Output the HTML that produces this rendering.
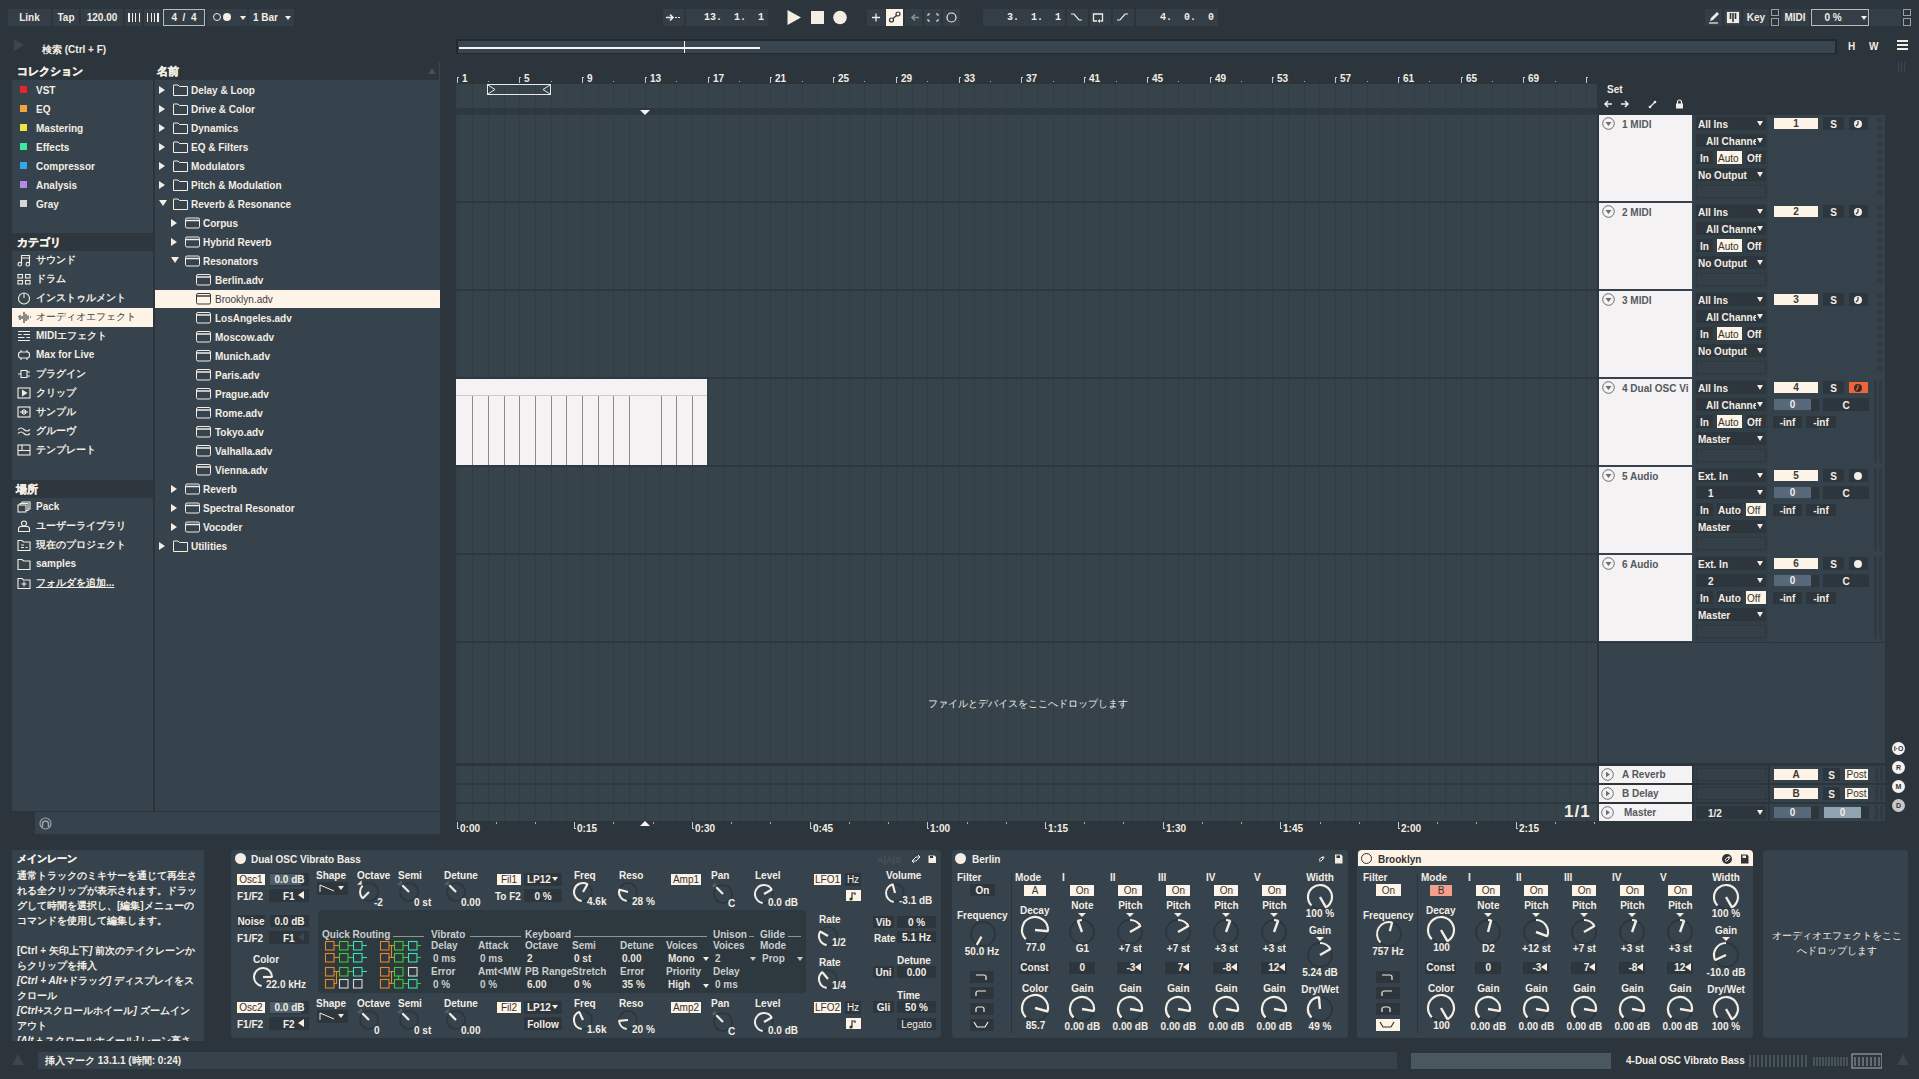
<!DOCTYPE html><html><head><meta charset="utf-8"><style>
html,body{margin:0;padding:0;width:1919px;height:1079px;overflow:hidden;background:#2c353c;}
body{position:relative;font-family:"Liberation Sans",sans-serif;}
body>div,body>svg{position:absolute;}
.t{white-space:nowrap;}
.tri{width:0;height:0;border-style:solid;}
</style></head><body>
<div style="left:8px;top:9px;width:43px;height:17px;background:#333e46;"></div><div class="t " style="left:8px;top:13px;font-size:10px;line-height:10px;font-weight:bold;color:#f3ede4;width:43px;text-align:center">Link</div><div style="left:53px;top:9px;width:26px;height:17px;background:#333e46;"></div><div class="t " style="left:53px;top:13px;font-size:10px;line-height:10px;font-weight:bold;color:#f3ede4;width:26px;text-align:center">Tap</div><div style="left:81px;top:9px;width:42px;height:17px;background:#333e46;"></div><div class="t " style="left:81px;top:13px;font-size:10px;line-height:10px;font-weight:bold;color:#f3ede4;width:42px;text-align:center">120.00</div><div style="left:125px;top:9px;width:17px;height:17px;background:#333e46;"></div><div style="left:144px;top:9px;width:17px;height:17px;background:#333e46;"></div><div style="left:128px;top:13px;width:2px;height:9px;background:#f3ede4;"></div><div style="left:132px;top:13px;width:1px;height:9px;background:#f3ede4;"></div><div style="left:135px;top:13px;width:1px;height:9px;background:#f3ede4;"></div><div style="left:139px;top:13px;width:1px;height:9px;background:#f3ede4;"></div><div style="left:147px;top:13px;width:1px;height:9px;background:#f3ede4;"></div><div style="left:151px;top:13px;width:1px;height:9px;background:#f3ede4;"></div><div style="left:154px;top:13px;width:1px;height:9px;background:#f3ede4;"></div><div style="left:157px;top:13px;width:2px;height:9px;background:#f3ede4;"></div><div style="left:163px;top:9px;width:42px;height:17px;background:#333e46;box-sizing:border-box;border:1px solid #b9bcbc"></div><div class="t " style="left:163px;top:13px;font-size:10px;line-height:10px;font-weight:bold;color:#f3ede4;width:42px;text-align:center">4 &nbsp;/ &nbsp;4</div><div style="left:207px;top:9px;width:40px;height:17px;background:#333e46;"></div><div style="left:213px;top:13px;width:8px;height:8px;box-sizing:border-box;border:1px solid #f3ede4;border-radius:50%"></div><div style="left:223px;top:13px;width:8px;height:8px;background:#f3ede4;border-radius:50%"></div><div class="tri" style="left:240px;top:16px;border-width:4px 3px 0 3px;border-color:#f3ede4 transparent transparent transparent"></div><div style="left:249px;top:9px;width:45px;height:17px;background:#333e46;"></div><div class="t " style="left:253px;top:13px;font-size:10px;line-height:10px;font-weight:bold;color:#f3ede4;">1 Bar</div><div class="tri" style="left:285px;top:16px;border-width:4px 3px 0 3px;border-color:#f3ede4 transparent transparent transparent"></div><div style="left:663px;top:9px;width:21px;height:17px;background:#333e46;"></div><svg style="left:665px;top:12px" width="18" height="11"><path d="M1 5.5h7M5 2.5l3 3-3 3" stroke="#f3ede4" stroke-width="1.6" fill="none"/><path d="M10 5.5h2M13 5.5h2" stroke="#f3ede4" stroke-width="1.2"/></svg><div style="left:686px;top:9px;width:82px;height:17px;background:#333e46;"></div><div class="t " style="left:686px;top:13px;font-size:10px;line-height:10px;font-weight:bold;color:#f3ede4;width:78px;text-align:right;font-family:'Liberation Mono'">13.&nbsp;&nbsp;1.&nbsp;&nbsp;1</div><svg style="left:786px;top:9px" width="62" height="18"><path d="M1.5 1L15 8.5 1.5 16z" fill="#f3ede4"/><rect x="25" y="2" width="13" height="13" fill="#f3ede4"/><circle cx="54" cy="8.5" r="6.8" fill="#f3ede4"/></svg><div style="left:867px;top:9px;width:18px;height:17px;background:#333e46;"></div><div style="left:886px;top:9px;width:17px;height:17px;background:#fdf3e6;"></div><div style="left:905px;top:9px;width:17px;height:17px;background:#333e46;"></div><div style="left:924px;top:9px;width:17px;height:17px;background:#333e46;"></div><div style="left:943px;top:9px;width:17px;height:17px;background:#333e46;"></div><svg style="left:867px;top:9px" width="94" height="17"><path d="M9 4.5v8M5 8.5h8" stroke="#f3ede4" stroke-width="1.3"/><circle cx="24.5" cy="11" r="2" fill="none" stroke="#2c353c" stroke-width="1.2"/><circle cx="31" cy="5" r="2" fill="none" stroke="#2c353c" stroke-width="1.2"/><path d="M26 9.5l3.5-3" stroke="#2c353c" stroke-width="1.2"/><path d="M45 8.5h7M48 5.5l-3 3 3 3" stroke="#8a8f90" stroke-width="1.6" fill="none"/><path d="M61 7V5h2M69 5h2v2M71 10v2h-2M63 12h-2v-2" stroke="#f3ede4" stroke-width="1" fill="none"/><circle cx="84.5" cy="8.5" r="4.5" fill="none" stroke="#f3ede4" stroke-width="1.2"/></svg><div style="left:983px;top:9px;width:82px;height:17px;background:#333e46;"></div><div class="t " style="left:983px;top:13px;font-size:10px;line-height:10px;font-weight:bold;color:#f3ede4;width:78px;text-align:right;font-family:'Liberation Mono'">3.&nbsp;&nbsp;1.&nbsp;&nbsp;1</div><div style="left:1067px;top:9px;width:21px;height:17px;background:#333e46;"></div><div style="left:1090px;top:9px;width:21px;height:17px;background:#333e46;"></div><div style="left:1113px;top:9px;width:21px;height:17px;background:#333e46;"></div><svg style="left:1067px;top:9px" width="68" height="17"><path d="M4 5h3l5 6h3" stroke="#f3ede4" stroke-width="1.2" fill="none"/><path d="M30 12h-3.5v-7h9v7h-2" stroke="#f3ede4" stroke-width="1.3" fill="none"/><path d="M33 10l-2.5 2 2.5 2z" fill="#f3ede4"/><path d="M50 11h3l5-6h3" stroke="#f3ede4" stroke-width="1.2" fill="none"/></svg><div style="left:1136px;top:9px;width:82px;height:17px;background:#333e46;"></div><div class="t " style="left:1136px;top:13px;font-size:10px;line-height:10px;font-weight:bold;color:#f3ede4;width:78px;text-align:right;font-family:'Liberation Mono'">4.&nbsp;&nbsp;0.&nbsp;&nbsp;0</div><div style="left:1705px;top:9px;width:17px;height:17px;background:#333e46;"></div><div style="left:1724px;top:9px;width:17px;height:17px;background:#333e46;"></div><div style="left:1743px;top:9px;width:26px;height:17px;background:#333e46;"></div><div style="left:1781px;top:9px;width:28px;height:17px;background:#333e46;"></div><svg style="left:1705px;top:9px" width="40" height="17"><path d="M4 14h9" stroke="#f3ede4" stroke-width="1.2"/><path d="M5 12l1-3 6-6 2 2-6 6z" fill="#f3ede4"/><rect x="22.5" y="3.5" width="11" height="10" fill="#f3ede4" stroke="#f3ede4" stroke-width="1.2"/><path d="M25.5 4v6M28 4v9M30.5 4v6" stroke="#2c353c" stroke-width="1.6"/></svg><div class="t " style="left:1743px;top:13px;font-size:10px;line-height:10px;font-weight:bold;color:#f3ede4;width:26px;text-align:center">Key</div><div style="left:1771px;top:9px;width:8px;height:7px;box-sizing:border-box;border:1px solid #9aa0a3"></div><div style="left:1771px;top:18px;width:8px;height:8px;box-sizing:border-box;border:1px solid #9aa0a3"></div><div class="t " style="left:1781px;top:13px;font-size:10px;line-height:10px;font-weight:bold;color:#f3ede4;width:28px;text-align:center">MIDI</div><div style="left:1811px;top:9px;width:58px;height:17px;background:#333e46;box-sizing:border-box;border:1px solid #b9bcbc"></div><div class="t " style="left:1811px;top:13px;font-size:10px;line-height:10px;font-weight:bold;color:#f3ede4;width:44px;text-align:center">0 %</div><div class="tri" style="left:1861px;top:16px;border-width:4px 3px 0 3px;border-color:#f3ede4 transparent transparent transparent"></div><div style="left:1870px;top:9px;width:31px;height:17px;background:#333e46;"></div><div style="left:1903px;top:9px;width:8px;height:7px;box-sizing:border-box;border:1px solid #9aa0a3"></div><div style="left:1903px;top:18px;width:8px;height:8px;box-sizing:border-box;border:1px solid #9aa0a3"></div><div class="tri" style="left:14px;top:39px;border-width:6px 0 6px 10px;border-color:transparent transparent transparent #3b464e"></div><div class="t " style="left:42px;top:45px;font-size:10px;line-height:10px;font-weight:bold;color:#f3ede4;">検索 (Ctrl + F)</div><div style="left:456px;top:39px;width:1381px;height:15px;background:#222a30;"></div><div style="left:458px;top:41px;width:1377px;height:12px;background:#39464f;"></div><div style="left:459px;top:47px;width:301px;height:2px;background:#f4f4f4;"></div><div style="left:684px;top:41px;width:1px;height:12px;background:#f4f4f4;"></div><div class="t " style="left:1848px;top:42px;font-size:10px;line-height:10px;font-weight:bold;color:#f3ede4;">H</div><div class="t " style="left:1869px;top:42px;font-size:10px;line-height:10px;font-weight:bold;color:#f3ede4;">W</div><div style="left:1897px;top:40px;width:11px;height:2px;background:#f3ede4;"></div><div style="left:1897px;top:44px;width:11px;height:2px;background:#f3ede4;"></div><div style="left:1897px;top:48px;width:11px;height:2px;background:#f3ede4;"></div><div class="t " style="left:17px;top:66px;font-size:11px;line-height:11px;font-weight:bold;color:#f3ede4;-webkit-text-stroke:0.35px #f3ede4">コレクション</div><div class="t " style="left:157px;top:66px;font-size:11px;line-height:11px;font-weight:bold;color:#f3ede4;-webkit-text-stroke:0.35px #f3ede4">名前</div><div class="tri" style="left:428px;top:68px;border-width:0 4px 6px 4px;border-color:transparent transparent #45525b transparent"></div><div style="left:439px;top:62px;width:1px;height:18px;background:#3a464e;"></div><div style="left:12px;top:80px;width:141px;height:153px;background:#37434c;"></div><div style="left:12px;top:233px;width:141px;height:18px;background:#2e373e;"></div><div style="left:12px;top:251px;width:141px;height:229px;background:#37434c;"></div><div style="left:12px;top:480px;width:141px;height:18px;background:#2e373e;"></div><div style="left:12px;top:498px;width:141px;height:313px;background:#37434c;"></div><div style="left:155px;top:80px;width:285px;height:731px;background:#37434c;"></div><div class="t " style="left:17px;top:237px;font-size:11px;line-height:11px;font-weight:bold;color:#f3ede4;-webkit-text-stroke:0.35px #f3ede4">カテゴリ</div><div class="t " style="left:16px;top:484px;font-size:11px;line-height:11px;font-weight:bold;color:#f3ede4;-webkit-text-stroke:0.35px #f3ede4">場所</div><div style="left:20px;top:86px;width:7px;height:7px;background:#e8262a;"></div><div class="t " style="left:36px;top:86px;font-size:10px;line-height:10px;font-weight:bold;color:#f3ede4;">VST</div><div style="left:20px;top:105px;width:7px;height:7px;background:#f4a23c;"></div><div class="t " style="left:36px;top:105px;font-size:10px;line-height:10px;font-weight:bold;color:#f3ede4;">EQ</div><div style="left:20px;top:124px;width:7px;height:7px;background:#f2e344;"></div><div class="t " style="left:36px;top:124px;font-size:10px;line-height:10px;font-weight:bold;color:#f3ede4;">Mastering</div><div style="left:20px;top:143px;width:7px;height:7px;background:#3de8a0;"></div><div class="t " style="left:36px;top:143px;font-size:10px;line-height:10px;font-weight:bold;color:#f3ede4;">Effects</div><div style="left:20px;top:162px;width:7px;height:7px;background:#2fa9ec;"></div><div class="t " style="left:36px;top:162px;font-size:10px;line-height:10px;font-weight:bold;color:#f3ede4;">Compressor</div><div style="left:20px;top:181px;width:7px;height:7px;background:#b48ae8;"></div><div class="t " style="left:36px;top:181px;font-size:10px;line-height:10px;font-weight:bold;color:#f3ede4;">Analysis</div><div style="left:20px;top:200px;width:7px;height:7px;background:#d6d6d6;"></div><div class="t " style="left:36px;top:200px;font-size:10px;line-height:10px;font-weight:bold;color:#f3ede4;">Gray</div><svg style="left:17px;top:254px" width="15" height="13"><g fill="none" stroke="#f3ede4" stroke-width="1.1"><path d="M4.5 10V1.5h8V10M4.5 4h8" /><circle cx="2.8" cy="10.2" r="1.8"/><circle cx="10.8" cy="10.2" r="1.8"/></g></svg><div class="t " style="left:36px;top:255px;font-size:10px;line-height:10px;font-weight:bold;color:#f3ede4;">サウンド</div><svg style="left:17px;top:273px" width="15" height="13"><g fill="none" stroke="#f3ede4" stroke-width="1.1"><rect x="1" y="1.5" width="4.5" height="3.5"/><rect x="8.5" y="1.5" width="4.5" height="3.5"/><rect x="1" y="7.5" width="4.5" height="3.5"/><rect x="8.5" y="7.5" width="4.5" height="3.5"/></g></svg><div class="t " style="left:36px;top:274px;font-size:10px;line-height:10px;font-weight:bold;color:#f3ede4;">ドラム</div><svg style="left:17px;top:292px" width="15" height="13"><g fill="none" stroke="#f3ede4" stroke-width="1.1"><circle cx="7" cy="6.5" r="5.5"/><path d="M7 1v5"/></g></svg><div class="t " style="left:36px;top:293px;font-size:10px;line-height:10px;font-weight:bold;color:#f3ede4;">インストゥルメント</div><div style="left:12px;top:308px;width:141px;height:19px;background:#fdf3e6;"></div><svg style="left:17px;top:311px" width="15" height="13"><g fill="none" stroke="#333" stroke-width="1.1"><path d="M1 6h1M3 4v5M5 5v3M7 1v11M9 3v7M11 4.5v4M13 6h1"/></g></svg><div class="t " style="left:36px;top:312px;font-size:10px;line-height:10px;font-weight:normal;color:#3b3b3b;">オーディオエフェクト</div><svg style="left:17px;top:330px" width="15" height="13"><g fill="none" stroke="#f3ede4" stroke-width="1.1"><path d="M1 1.5h12M1 4.5h3.5M6.5 4.5h6.5M1 7.5h6.5M9.5 7.5h3.5M1 10.5h12" stroke-width="1"/></g></svg><div class="t " style="left:36px;top:331px;font-size:10px;line-height:10px;font-weight:bold;color:#f3ede4;">MIDIエフェクト</div><svg style="left:17px;top:349px" width="15" height="13"><g fill="none" stroke="#f3ede4" stroke-width="1.1"><rect x="1.5" y="3" width="11" height="6" rx="2.5"/><path d="M4 1v2M10 1v2M4 9v2M10 9v2"/></g></svg><div class="t " style="left:36px;top:350px;font-size:10px;line-height:10px;font-weight:bold;color:#f3ede4;">Max for Live</div><svg style="left:17px;top:368px" width="15" height="13"><g fill="none" stroke="#f3ede4" stroke-width="1.1"><path d="M1 6h3M4 2.5h6v7H4zM10 4h3M10 8h3"/></g></svg><div class="t " style="left:36px;top:369px;font-size:10px;line-height:10px;font-weight:bold;color:#f3ede4;">プラグイン</div><svg style="left:17px;top:387px" width="15" height="13"><g fill="none" stroke="#f3ede4" stroke-width="1.1"><rect x="1" y="1" width="12" height="10"/><path d="M5.5 3.5v5l4-2.5z" fill="#f3ede4"/></g></svg><div class="t " style="left:36px;top:388px;font-size:10px;line-height:10px;font-weight:bold;color:#f3ede4;">クリップ</div><svg style="left:17px;top:406px" width="15" height="13"><g fill="none" stroke="#f3ede4" stroke-width="1.1"><rect x="1" y="1" width="12" height="10"/><path d="M4 5v2M5.5 4v4M7 3v6M8.5 4v4M10 5v2"/></g></svg><div class="t " style="left:36px;top:407px;font-size:10px;line-height:10px;font-weight:bold;color:#f3ede4;">サンプル</div><svg style="left:17px;top:425px" width="15" height="13"><g fill="none" stroke="#f3ede4" stroke-width="1.1"><path d="M1 4.5q3-3 6 0t6 0M1 8.5q3-3 6 0t6 0"/></g></svg><div class="t " style="left:36px;top:426px;font-size:10px;line-height:10px;font-weight:bold;color:#f3ede4;">グルーヴ</div><svg style="left:17px;top:444px" width="15" height="13"><g fill="none" stroke="#f3ede4" stroke-width="1.1"><rect x="1" y="1" width="12" height="10"/><path d="M1 6.5h12M5 1v5.5"/></g></svg><div class="t " style="left:36px;top:445px;font-size:10px;line-height:10px;font-weight:bold;color:#f3ede4;">テンプレート</div><svg style="left:17px;top:501px" width="15" height="13"><g fill="none" stroke="#f3ede4" stroke-width="1.1"><rect x="1" y="4" width="8" height="7"/><path d="M3 4V2.5h8v7H9M5 2.5V1h8v7h-2"/></g></svg><div class="t " style="left:36px;top:502px;font-size:10px;line-height:10px;font-weight:bold;color:#f3ede4;">Pack</div><svg style="left:17px;top:520px" width="15" height="13"><g fill="none" stroke="#f3ede4" stroke-width="1.1"><circle cx="7" cy="3.5" r="2.5"/><path d="M1.5 11.5v-2.5q0-2.5 2.5-2.5h6q2.5 0 2.5 2.5v2.5z"/></g></svg><div class="t " style="left:36px;top:521px;font-size:10px;line-height:10px;font-weight:bold;color:#f3ede4;">ユーザーライブラリ</div><svg style="left:17px;top:539px" width="15" height="13"><g fill="none" stroke="#f3ede4" stroke-width="1.1"><path d="M1 1.5h4l1.5 1.5H13v8.5H1z"/><path d="M4 6h3M4 8.5h3M8.5 8.5h2"/></g></svg><div class="t " style="left:36px;top:540px;font-size:10px;line-height:10px;font-weight:bold;color:#f3ede4;">現在のプロジェクト</div><svg style="left:17px;top:558px" width="15" height="13"><g fill="none" stroke="#f3ede4" stroke-width="1.1"><path d="M1 1.5h4l1.5 1.5H13v8.5H1z"/></g></svg><div class="t " style="left:36px;top:559px;font-size:10px;line-height:10px;font-weight:bold;color:#f3ede4;">samples</div><svg style="left:17px;top:577px" width="15" height="13"><g fill="none" stroke="#f3ede4" stroke-width="1.1"><path d="M1 1.5h4l1.5 1.5H13v8.5H1z"/><path d="M7 4.5v5M4.5 7h5"/></g></svg><div class="t " style="left:36px;top:578px;font-size:10px;line-height:10px;font-weight:bold;color:#f3ede4;text-decoration:underline">フォルダを追加...</div><div class="tri" style="left:159px;top:86px;border-width:4px 0 4px 6px;border-color:transparent transparent transparent #f3ede4"></div><svg style="left:173px;top:83px" width="16" height="13"><path d="M0.5 2.5v10h14v-9h-8l-1.5-1.5h-4.5z" fill="none" stroke="#f3ede4" stroke-width="1"/></svg><div class="t " style="left:191px;top:86px;font-size:10px;line-height:10px;font-weight:bold;color:#f3ede4;">Delay &amp; Loop</div><div class="tri" style="left:159px;top:105px;border-width:4px 0 4px 6px;border-color:transparent transparent transparent #f3ede4"></div><svg style="left:173px;top:102px" width="16" height="13"><path d="M0.5 2.5v10h14v-9h-8l-1.5-1.5h-4.5z" fill="none" stroke="#f3ede4" stroke-width="1"/></svg><div class="t " style="left:191px;top:105px;font-size:10px;line-height:10px;font-weight:bold;color:#f3ede4;">Drive &amp; Color</div><div class="tri" style="left:159px;top:124px;border-width:4px 0 4px 6px;border-color:transparent transparent transparent #f3ede4"></div><svg style="left:173px;top:121px" width="16" height="13"><path d="M0.5 2.5v10h14v-9h-8l-1.5-1.5h-4.5z" fill="none" stroke="#f3ede4" stroke-width="1"/></svg><div class="t " style="left:191px;top:124px;font-size:10px;line-height:10px;font-weight:bold;color:#f3ede4;">Dynamics</div><div class="tri" style="left:159px;top:143px;border-width:4px 0 4px 6px;border-color:transparent transparent transparent #f3ede4"></div><svg style="left:173px;top:140px" width="16" height="13"><path d="M0.5 2.5v10h14v-9h-8l-1.5-1.5h-4.5z" fill="none" stroke="#f3ede4" stroke-width="1"/></svg><div class="t " style="left:191px;top:143px;font-size:10px;line-height:10px;font-weight:bold;color:#f3ede4;">EQ &amp; Filters</div><div class="tri" style="left:159px;top:162px;border-width:4px 0 4px 6px;border-color:transparent transparent transparent #f3ede4"></div><svg style="left:173px;top:159px" width="16" height="13"><path d="M0.5 2.5v10h14v-9h-8l-1.5-1.5h-4.5z" fill="none" stroke="#f3ede4" stroke-width="1"/></svg><div class="t " style="left:191px;top:162px;font-size:10px;line-height:10px;font-weight:bold;color:#f3ede4;">Modulators</div><div class="tri" style="left:159px;top:181px;border-width:4px 0 4px 6px;border-color:transparent transparent transparent #f3ede4"></div><svg style="left:173px;top:178px" width="16" height="13"><path d="M0.5 2.5v10h14v-9h-8l-1.5-1.5h-4.5z" fill="none" stroke="#f3ede4" stroke-width="1"/></svg><div class="t " style="left:191px;top:181px;font-size:10px;line-height:10px;font-weight:bold;color:#f3ede4;">Pitch &amp; Modulation</div><div class="tri" style="left:159px;top:200px;border-width:6px 4px 0 4px;border-color:#f3ede4 transparent transparent transparent"></div><svg style="left:173px;top:197px" width="16" height="13"><path d="M0.5 2.5v10h14v-9h-8l-1.5-1.5h-4.5z" fill="none" stroke="#f3ede4" stroke-width="1"/></svg><div class="t " style="left:191px;top:200px;font-size:10px;line-height:10px;font-weight:bold;color:#f3ede4;">Reverb &amp; Resonance</div><div class="tri" style="left:171px;top:219px;border-width:4px 0 4px 6px;border-color:transparent transparent transparent #f3ede4"></div><svg style="left:185px;top:217px" width="16" height="12"><rect x="0.5" y="1" width="14" height="10" rx="1.5" fill="none" stroke="#f3ede4" stroke-width="1"/><path d="M0.5 3.5h14" stroke="#f3ede4" stroke-width="1.5"/></svg><div class="t " style="left:203px;top:219px;font-size:10px;line-height:10px;font-weight:bold;color:#f3ede4;">Corpus</div><div class="tri" style="left:171px;top:238px;border-width:4px 0 4px 6px;border-color:transparent transparent transparent #f3ede4"></div><svg style="left:185px;top:236px" width="16" height="12"><rect x="0.5" y="1" width="14" height="10" rx="1.5" fill="none" stroke="#f3ede4" stroke-width="1"/><path d="M0.5 3.5h14" stroke="#f3ede4" stroke-width="1.5"/></svg><div class="t " style="left:203px;top:238px;font-size:10px;line-height:10px;font-weight:bold;color:#f3ede4;">Hybrid Reverb</div><div class="tri" style="left:171px;top:257px;border-width:6px 4px 0 4px;border-color:#f3ede4 transparent transparent transparent"></div><svg style="left:185px;top:255px" width="16" height="12"><rect x="0.5" y="1" width="14" height="10" rx="1.5" fill="none" stroke="#f3ede4" stroke-width="1"/><path d="M0.5 3.5h14" stroke="#f3ede4" stroke-width="1.5"/></svg><div class="t " style="left:203px;top:257px;font-size:10px;line-height:10px;font-weight:bold;color:#f3ede4;">Resonators</div><svg style="left:196px;top:274px" width="16" height="12"><rect x="0.5" y="0.5" width="14" height="10.5" rx="1.5" fill="none" stroke="#f3ede4" stroke-width="1"/><path d="M0.5 3h14" stroke="#f3ede4" stroke-width="1.5"/></svg><div class="t " style="left:215px;top:276px;font-size:10px;line-height:10px;font-weight:bold;color:#f3ede4;">Berlin.adv</div><div style="left:155px;top:290px;width:285px;height:18px;background:#fdf3e6;"></div><svg style="left:196px;top:293px" width="16" height="12"><rect x="0.5" y="0.5" width="14" height="10.5" rx="1.5" fill="none" stroke="#3b3b3b" stroke-width="1"/><path d="M0.5 3h14" stroke="#3b3b3b" stroke-width="1.5"/></svg><div class="t " style="left:215px;top:295px;font-size:10px;line-height:10px;font-weight:normal;color:#3b3b3b;">Brooklyn.adv</div><svg style="left:196px;top:312px" width="16" height="12"><rect x="0.5" y="0.5" width="14" height="10.5" rx="1.5" fill="none" stroke="#f3ede4" stroke-width="1"/><path d="M0.5 3h14" stroke="#f3ede4" stroke-width="1.5"/></svg><div class="t " style="left:215px;top:314px;font-size:10px;line-height:10px;font-weight:bold;color:#f3ede4;">LosAngeles.adv</div><svg style="left:196px;top:331px" width="16" height="12"><rect x="0.5" y="0.5" width="14" height="10.5" rx="1.5" fill="none" stroke="#f3ede4" stroke-width="1"/><path d="M0.5 3h14" stroke="#f3ede4" stroke-width="1.5"/></svg><div class="t " style="left:215px;top:333px;font-size:10px;line-height:10px;font-weight:bold;color:#f3ede4;">Moscow.adv</div><svg style="left:196px;top:350px" width="16" height="12"><rect x="0.5" y="0.5" width="14" height="10.5" rx="1.5" fill="none" stroke="#f3ede4" stroke-width="1"/><path d="M0.5 3h14" stroke="#f3ede4" stroke-width="1.5"/></svg><div class="t " style="left:215px;top:352px;font-size:10px;line-height:10px;font-weight:bold;color:#f3ede4;">Munich.adv</div><svg style="left:196px;top:369px" width="16" height="12"><rect x="0.5" y="0.5" width="14" height="10.5" rx="1.5" fill="none" stroke="#f3ede4" stroke-width="1"/><path d="M0.5 3h14" stroke="#f3ede4" stroke-width="1.5"/></svg><div class="t " style="left:215px;top:371px;font-size:10px;line-height:10px;font-weight:bold;color:#f3ede4;">Paris.adv</div><svg style="left:196px;top:388px" width="16" height="12"><rect x="0.5" y="0.5" width="14" height="10.5" rx="1.5" fill="none" stroke="#f3ede4" stroke-width="1"/><path d="M0.5 3h14" stroke="#f3ede4" stroke-width="1.5"/></svg><div class="t " style="left:215px;top:390px;font-size:10px;line-height:10px;font-weight:bold;color:#f3ede4;">Prague.adv</div><svg style="left:196px;top:407px" width="16" height="12"><rect x="0.5" y="0.5" width="14" height="10.5" rx="1.5" fill="none" stroke="#f3ede4" stroke-width="1"/><path d="M0.5 3h14" stroke="#f3ede4" stroke-width="1.5"/></svg><div class="t " style="left:215px;top:409px;font-size:10px;line-height:10px;font-weight:bold;color:#f3ede4;">Rome.adv</div><svg style="left:196px;top:426px" width="16" height="12"><rect x="0.5" y="0.5" width="14" height="10.5" rx="1.5" fill="none" stroke="#f3ede4" stroke-width="1"/><path d="M0.5 3h14" stroke="#f3ede4" stroke-width="1.5"/></svg><div class="t " style="left:215px;top:428px;font-size:10px;line-height:10px;font-weight:bold;color:#f3ede4;">Tokyo.adv</div><svg style="left:196px;top:445px" width="16" height="12"><rect x="0.5" y="0.5" width="14" height="10.5" rx="1.5" fill="none" stroke="#f3ede4" stroke-width="1"/><path d="M0.5 3h14" stroke="#f3ede4" stroke-width="1.5"/></svg><div class="t " style="left:215px;top:447px;font-size:10px;line-height:10px;font-weight:bold;color:#f3ede4;">Valhalla.adv</div><svg style="left:196px;top:464px" width="16" height="12"><rect x="0.5" y="0.5" width="14" height="10.5" rx="1.5" fill="none" stroke="#f3ede4" stroke-width="1"/><path d="M0.5 3h14" stroke="#f3ede4" stroke-width="1.5"/></svg><div class="t " style="left:215px;top:466px;font-size:10px;line-height:10px;font-weight:bold;color:#f3ede4;">Vienna.adv</div><div class="tri" style="left:171px;top:485px;border-width:4px 0 4px 6px;border-color:transparent transparent transparent #f3ede4"></div><svg style="left:185px;top:483px" width="16" height="12"><rect x="0.5" y="1" width="14" height="10" rx="1.5" fill="none" stroke="#f3ede4" stroke-width="1"/><path d="M0.5 3.5h14" stroke="#f3ede4" stroke-width="1.5"/></svg><div class="t " style="left:203px;top:485px;font-size:10px;line-height:10px;font-weight:bold;color:#f3ede4;">Reverb</div><div class="tri" style="left:171px;top:504px;border-width:4px 0 4px 6px;border-color:transparent transparent transparent #f3ede4"></div><svg style="left:185px;top:502px" width="16" height="12"><rect x="0.5" y="1" width="14" height="10" rx="1.5" fill="none" stroke="#f3ede4" stroke-width="1"/><path d="M0.5 3.5h14" stroke="#f3ede4" stroke-width="1.5"/></svg><div class="t " style="left:203px;top:504px;font-size:10px;line-height:10px;font-weight:bold;color:#f3ede4;">Spectral Resonator</div><div class="tri" style="left:171px;top:523px;border-width:4px 0 4px 6px;border-color:transparent transparent transparent #f3ede4"></div><svg style="left:185px;top:521px" width="16" height="12"><rect x="0.5" y="1" width="14" height="10" rx="1.5" fill="none" stroke="#f3ede4" stroke-width="1"/><path d="M0.5 3.5h14" stroke="#f3ede4" stroke-width="1.5"/></svg><div class="t " style="left:203px;top:523px;font-size:10px;line-height:10px;font-weight:bold;color:#f3ede4;">Vocoder</div><div class="tri" style="left:159px;top:542px;border-width:4px 0 4px 6px;border-color:transparent transparent transparent #f3ede4"></div><svg style="left:173px;top:539px" width="16" height="13"><path d="M0.5 2.5v10h14v-9h-8l-1.5-1.5h-4.5z" fill="none" stroke="#f3ede4" stroke-width="1"/></svg><div class="t " style="left:191px;top:542px;font-size:10px;line-height:10px;font-weight:bold;color:#f3ede4;">Utilities</div><div style="left:35px;top:812px;width:405px;height:22px;background:#37434c;"></div><svg style="left:39px;top:817px" width="13" height="13"><circle cx="6.5" cy="6.5" r="5.5" fill="none" stroke="#9aa5ab" stroke-width="1.2"/><path d="M3.5 10V7a3 3 0 0 1 6 0v3" fill="none" stroke="#9aa5ab" stroke-width="1.5"/></svg><div style="left:456px;top:84px;width:1141px;height:24px;background:#36434b;"></div><div style="left:456px;top:108px;width:1141px;height:7px;background:#2e383f;"></div><div style="left:456px;top:115px;width:1141px;height:86px;background:#36434b;"></div><div style="left:456px;top:203px;width:1141px;height:86px;background:#36434b;"></div><div style="left:456px;top:291px;width:1141px;height:86px;background:#36434b;"></div><div style="left:456px;top:379px;width:1141px;height:86px;background:#36434b;"></div><div style="left:456px;top:467px;width:1141px;height:86px;background:#36434b;"></div><div style="left:456px;top:555px;width:1141px;height:86px;background:#36434b;"></div><div style="left:456px;top:643px;width:1141px;height:120px;background:#36434b;"></div><div style="left:456px;top:766px;width:1141px;height:17px;background:#36434b;"></div><div style="left:456px;top:785px;width:1141px;height:17px;background:#36434b;"></div><div style="left:456px;top:804px;width:1141px;height:17px;background:#36434b;"></div><div style="left:456.50px;top:84px;width:1px;height:737px;background:#313c43"></div><div style="left:472.19px;top:84px;width:1px;height:737px;background:#313c43"></div><div style="left:487.88px;top:84px;width:1px;height:737px;background:#313c43"></div><div style="left:503.57px;top:84px;width:1px;height:737px;background:#313c43"></div><div style="left:519.26px;top:84px;width:1px;height:737px;background:#313c43"></div><div style="left:534.95px;top:84px;width:1px;height:737px;background:#313c43"></div><div style="left:550.64px;top:84px;width:1px;height:737px;background:#313c43"></div><div style="left:566.33px;top:84px;width:1px;height:737px;background:#313c43"></div><div style="left:582.02px;top:84px;width:1px;height:737px;background:#313c43"></div><div style="left:597.71px;top:84px;width:1px;height:737px;background:#313c43"></div><div style="left:613.40px;top:84px;width:1px;height:737px;background:#313c43"></div><div style="left:629.09px;top:84px;width:1px;height:737px;background:#313c43"></div><div style="left:644.78px;top:84px;width:1px;height:737px;background:#313c43"></div><div style="left:660.47px;top:84px;width:1px;height:737px;background:#313c43"></div><div style="left:676.16px;top:84px;width:1px;height:737px;background:#313c43"></div><div style="left:691.85px;top:84px;width:1px;height:737px;background:#313c43"></div><div style="left:707.54px;top:84px;width:1px;height:737px;background:#313c43"></div><div style="left:723.23px;top:84px;width:1px;height:737px;background:#313c43"></div><div style="left:738.92px;top:84px;width:1px;height:737px;background:#313c43"></div><div style="left:754.61px;top:84px;width:1px;height:737px;background:#313c43"></div><div style="left:770.30px;top:84px;width:1px;height:737px;background:#313c43"></div><div style="left:785.99px;top:84px;width:1px;height:737px;background:#313c43"></div><div style="left:801.68px;top:84px;width:1px;height:737px;background:#313c43"></div><div style="left:817.37px;top:84px;width:1px;height:737px;background:#313c43"></div><div style="left:833.06px;top:84px;width:1px;height:737px;background:#313c43"></div><div style="left:848.75px;top:84px;width:1px;height:737px;background:#313c43"></div><div style="left:864.44px;top:84px;width:1px;height:737px;background:#313c43"></div><div style="left:880.13px;top:84px;width:1px;height:737px;background:#313c43"></div><div style="left:895.82px;top:84px;width:1px;height:737px;background:#313c43"></div><div style="left:911.51px;top:84px;width:1px;height:737px;background:#313c43"></div><div style="left:927.20px;top:84px;width:1px;height:737px;background:#313c43"></div><div style="left:942.89px;top:84px;width:1px;height:737px;background:#313c43"></div><div style="left:958.58px;top:84px;width:1px;height:737px;background:#313c43"></div><div style="left:974.27px;top:84px;width:1px;height:737px;background:#313c43"></div><div style="left:989.96px;top:84px;width:1px;height:737px;background:#313c43"></div><div style="left:1005.65px;top:84px;width:1px;height:737px;background:#313c43"></div><div style="left:1021.34px;top:84px;width:1px;height:737px;background:#313c43"></div><div style="left:1037.03px;top:84px;width:1px;height:737px;background:#313c43"></div><div style="left:1052.72px;top:84px;width:1px;height:737px;background:#313c43"></div><div style="left:1068.41px;top:84px;width:1px;height:737px;background:#313c43"></div><div style="left:1084.10px;top:84px;width:1px;height:737px;background:#313c43"></div><div style="left:1099.79px;top:84px;width:1px;height:737px;background:#313c43"></div><div style="left:1115.48px;top:84px;width:1px;height:737px;background:#313c43"></div><div style="left:1131.17px;top:84px;width:1px;height:737px;background:#313c43"></div><div style="left:1146.86px;top:84px;width:1px;height:737px;background:#313c43"></div><div style="left:1162.55px;top:84px;width:1px;height:737px;background:#313c43"></div><div style="left:1178.24px;top:84px;width:1px;height:737px;background:#313c43"></div><div style="left:1193.93px;top:84px;width:1px;height:737px;background:#313c43"></div><div style="left:1209.62px;top:84px;width:1px;height:737px;background:#313c43"></div><div style="left:1225.31px;top:84px;width:1px;height:737px;background:#313c43"></div><div style="left:1241.00px;top:84px;width:1px;height:737px;background:#313c43"></div><div style="left:1256.69px;top:84px;width:1px;height:737px;background:#313c43"></div><div style="left:1272.38px;top:84px;width:1px;height:737px;background:#313c43"></div><div style="left:1288.07px;top:84px;width:1px;height:737px;background:#313c43"></div><div style="left:1303.76px;top:84px;width:1px;height:737px;background:#313c43"></div><div style="left:1319.45px;top:84px;width:1px;height:737px;background:#313c43"></div><div style="left:1335.14px;top:84px;width:1px;height:737px;background:#313c43"></div><div style="left:1350.83px;top:84px;width:1px;height:737px;background:#313c43"></div><div style="left:1366.52px;top:84px;width:1px;height:737px;background:#313c43"></div><div style="left:1382.21px;top:84px;width:1px;height:737px;background:#313c43"></div><div style="left:1397.90px;top:84px;width:1px;height:737px;background:#313c43"></div><div style="left:1413.59px;top:84px;width:1px;height:737px;background:#313c43"></div><div style="left:1429.28px;top:84px;width:1px;height:737px;background:#313c43"></div><div style="left:1444.97px;top:84px;width:1px;height:737px;background:#313c43"></div><div style="left:1460.66px;top:84px;width:1px;height:737px;background:#313c43"></div><div style="left:1476.35px;top:84px;width:1px;height:737px;background:#313c43"></div><div style="left:1492.04px;top:84px;width:1px;height:737px;background:#313c43"></div><div style="left:1507.73px;top:84px;width:1px;height:737px;background:#313c43"></div><div style="left:1523.42px;top:84px;width:1px;height:737px;background:#313c43"></div><div style="left:1539.11px;top:84px;width:1px;height:737px;background:#313c43"></div><div style="left:1554.80px;top:84px;width:1px;height:737px;background:#313c43"></div><div style="left:1570.49px;top:84px;width:1px;height:737px;background:#313c43"></div><div style="left:1586.18px;top:84px;width:1px;height:737px;background:#313c43"></div><div style="left:456px;top:108px;width:1141px;height:7px;background:#2e383f;"></div><div style="left:456px;top:201px;width:1141px;height:2px;background:#2e383f;"></div><div style="left:456px;top:289px;width:1141px;height:2px;background:#2e383f;"></div><div style="left:456px;top:377px;width:1141px;height:2px;background:#2e383f;"></div><div style="left:456px;top:465px;width:1141px;height:2px;background:#2e383f;"></div><div style="left:456px;top:553px;width:1141px;height:2px;background:#2e383f;"></div><div style="left:456px;top:641px;width:1141px;height:2px;background:#2e383f;"></div><div style="left:456px;top:763px;width:1141px;height:3px;background:#2b343a;"></div><div style="left:456px;top:783px;width:1141px;height:2px;background:#2e383f;"></div><div style="left:456px;top:802px;width:1141px;height:2px;background:#2e383f;"></div><div style="left:456.5px;top:77px;width:1px;height:6px;background:#c8c8c8"></div><div style="left:456.5px;top:77px;width:2px;height:1px;background:#c8c8c8"></div><div class="t " style="left:462px;top:74px;font-size:10px;line-height:10px;font-weight:bold;color:#f3ede4;">1</div><div style="left:487.9px;top:81px;width:1px;height:1px;background:#aaa"></div><div style="left:519.3px;top:77px;width:1px;height:6px;background:#c8c8c8"></div><div style="left:519.3px;top:77px;width:2px;height:1px;background:#c8c8c8"></div><div class="t " style="left:524px;top:74px;font-size:10px;line-height:10px;font-weight:bold;color:#f3ede4;">5</div><div style="left:550.6px;top:81px;width:1px;height:1px;background:#aaa"></div><div style="left:582.0px;top:77px;width:1px;height:6px;background:#c8c8c8"></div><div style="left:582.0px;top:77px;width:2px;height:1px;background:#c8c8c8"></div><div class="t " style="left:587px;top:74px;font-size:10px;line-height:10px;font-weight:bold;color:#f3ede4;">9</div><div style="left:613.4px;top:81px;width:1px;height:1px;background:#aaa"></div><div style="left:644.8px;top:77px;width:1px;height:6px;background:#c8c8c8"></div><div style="left:644.8px;top:77px;width:2px;height:1px;background:#c8c8c8"></div><div class="t " style="left:650px;top:74px;font-size:10px;line-height:10px;font-weight:bold;color:#f3ede4;">13</div><div style="left:676.2px;top:81px;width:1px;height:1px;background:#aaa"></div><div style="left:707.5px;top:77px;width:1px;height:6px;background:#c8c8c8"></div><div style="left:707.5px;top:77px;width:2px;height:1px;background:#c8c8c8"></div><div class="t " style="left:713px;top:74px;font-size:10px;line-height:10px;font-weight:bold;color:#f3ede4;">17</div><div style="left:738.9px;top:81px;width:1px;height:1px;background:#aaa"></div><div style="left:770.3px;top:77px;width:1px;height:6px;background:#c8c8c8"></div><div style="left:770.3px;top:77px;width:2px;height:1px;background:#c8c8c8"></div><div class="t " style="left:775px;top:74px;font-size:10px;line-height:10px;font-weight:bold;color:#f3ede4;">21</div><div style="left:801.7px;top:81px;width:1px;height:1px;background:#aaa"></div><div style="left:833.1px;top:77px;width:1px;height:6px;background:#c8c8c8"></div><div style="left:833.1px;top:77px;width:2px;height:1px;background:#c8c8c8"></div><div class="t " style="left:838px;top:74px;font-size:10px;line-height:10px;font-weight:bold;color:#f3ede4;">25</div><div style="left:864.4px;top:81px;width:1px;height:1px;background:#aaa"></div><div style="left:895.8px;top:77px;width:1px;height:6px;background:#c8c8c8"></div><div style="left:895.8px;top:77px;width:2px;height:1px;background:#c8c8c8"></div><div class="t " style="left:901px;top:74px;font-size:10px;line-height:10px;font-weight:bold;color:#f3ede4;">29</div><div style="left:927.2px;top:81px;width:1px;height:1px;background:#aaa"></div><div style="left:958.6px;top:77px;width:1px;height:6px;background:#c8c8c8"></div><div style="left:958.6px;top:77px;width:2px;height:1px;background:#c8c8c8"></div><div class="t " style="left:964px;top:74px;font-size:10px;line-height:10px;font-weight:bold;color:#f3ede4;">33</div><div style="left:990.0px;top:81px;width:1px;height:1px;background:#aaa"></div><div style="left:1021.3px;top:77px;width:1px;height:6px;background:#c8c8c8"></div><div style="left:1021.3px;top:77px;width:2px;height:1px;background:#c8c8c8"></div><div class="t " style="left:1026px;top:74px;font-size:10px;line-height:10px;font-weight:bold;color:#f3ede4;">37</div><div style="left:1052.7px;top:81px;width:1px;height:1px;background:#aaa"></div><div style="left:1084.1px;top:77px;width:1px;height:6px;background:#c8c8c8"></div><div style="left:1084.1px;top:77px;width:2px;height:1px;background:#c8c8c8"></div><div class="t " style="left:1089px;top:74px;font-size:10px;line-height:10px;font-weight:bold;color:#f3ede4;">41</div><div style="left:1115.5px;top:81px;width:1px;height:1px;background:#aaa"></div><div style="left:1146.9px;top:77px;width:1px;height:6px;background:#c8c8c8"></div><div style="left:1146.9px;top:77px;width:2px;height:1px;background:#c8c8c8"></div><div class="t " style="left:1152px;top:74px;font-size:10px;line-height:10px;font-weight:bold;color:#f3ede4;">45</div><div style="left:1178.2px;top:81px;width:1px;height:1px;background:#aaa"></div><div style="left:1209.6px;top:77px;width:1px;height:6px;background:#c8c8c8"></div><div style="left:1209.6px;top:77px;width:2px;height:1px;background:#c8c8c8"></div><div class="t " style="left:1215px;top:74px;font-size:10px;line-height:10px;font-weight:bold;color:#f3ede4;">49</div><div style="left:1241.0px;top:81px;width:1px;height:1px;background:#aaa"></div><div style="left:1272.4px;top:77px;width:1px;height:6px;background:#c8c8c8"></div><div style="left:1272.4px;top:77px;width:2px;height:1px;background:#c8c8c8"></div><div class="t " style="left:1277px;top:74px;font-size:10px;line-height:10px;font-weight:bold;color:#f3ede4;">53</div><div style="left:1303.8px;top:81px;width:1px;height:1px;background:#aaa"></div><div style="left:1335.1px;top:77px;width:1px;height:6px;background:#c8c8c8"></div><div style="left:1335.1px;top:77px;width:2px;height:1px;background:#c8c8c8"></div><div class="t " style="left:1340px;top:74px;font-size:10px;line-height:10px;font-weight:bold;color:#f3ede4;">57</div><div style="left:1366.5px;top:81px;width:1px;height:1px;background:#aaa"></div><div style="left:1397.9px;top:77px;width:1px;height:6px;background:#c8c8c8"></div><div style="left:1397.9px;top:77px;width:2px;height:1px;background:#c8c8c8"></div><div class="t " style="left:1403px;top:74px;font-size:10px;line-height:10px;font-weight:bold;color:#f3ede4;">61</div><div style="left:1429.3px;top:81px;width:1px;height:1px;background:#aaa"></div><div style="left:1460.7px;top:77px;width:1px;height:6px;background:#c8c8c8"></div><div style="left:1460.7px;top:77px;width:2px;height:1px;background:#c8c8c8"></div><div class="t " style="left:1466px;top:74px;font-size:10px;line-height:10px;font-weight:bold;color:#f3ede4;">65</div><div style="left:1492.0px;top:81px;width:1px;height:1px;background:#aaa"></div><div style="left:1523.4px;top:77px;width:1px;height:6px;background:#c8c8c8"></div><div style="left:1523.4px;top:77px;width:2px;height:1px;background:#c8c8c8"></div><div class="t " style="left:1528px;top:74px;font-size:10px;line-height:10px;font-weight:bold;color:#f3ede4;">69</div><div style="left:1554.8px;top:81px;width:1px;height:1px;background:#aaa"></div><div style="left:1586.2px;top:77px;width:1px;height:6px;background:#c8c8c8"></div><div style="left:1586.2px;top:77px;width:2px;height:1px;background:#c8c8c8"></div><div style="left:487px;top:84px;width:64px;height:11px;box-sizing:border-box;border:1px solid #e8e8e8"></div><svg style="left:487px;top:84px" width="64" height="11"><path d="M1 1l7 4.5-7 4.5M63 1l-7 4.5 7 4.5" fill="none" stroke="#e8e8e8" stroke-width="1"/></svg><div class="tri" style="left:640px;top:110px;border-width:5px 5px 0 5px;border-color:#f4f4f4 transparent transparent transparent"></div><div style="left:456px;top:379px;width:251px;height:86px;background:#f4f2f2;"></div><div style="left:456px;top:395px;width:251px;height:1px;background:#c9c9c9;"></div><div style="left:472.2px;top:396px;width:1px;height:69px;background:#8a8a8a"></div><div style="left:487.9px;top:396px;width:1px;height:69px;background:#8a8a8a"></div><div style="left:503.6px;top:396px;width:1px;height:69px;background:#8a8a8a"></div><div style="left:519.3px;top:396px;width:1px;height:69px;background:#8a8a8a"></div><div style="left:535.0px;top:396px;width:1px;height:69px;background:#8a8a8a"></div><div style="left:550.6px;top:396px;width:1px;height:69px;background:#8a8a8a"></div><div style="left:566.3px;top:396px;width:1px;height:69px;background:#8a8a8a"></div><div style="left:582.0px;top:396px;width:1px;height:69px;background:#8a8a8a"></div><div style="left:597.7px;top:396px;width:1px;height:69px;background:#8a8a8a"></div><div style="left:613.4px;top:396px;width:1px;height:69px;background:#8a8a8a"></div><div style="left:629.1px;top:396px;width:1px;height:69px;background:#8a8a8a"></div><div style="left:660.5px;top:396px;width:1px;height:69px;background:#8a8a8a"></div><div style="left:676.2px;top:396px;width:1px;height:69px;background:#8a8a8a"></div><div style="left:691.9px;top:396px;width:1px;height:69px;background:#8a8a8a"></div><div class="t " style="left:928px;top:699px;font-size:10px;line-height:10px;font-weight:normal;color:#f3ede4;">ファイルとデバイスをここへドロップします</div><div style="left:456px;top:821px;width:1141px;height:20px;background:#2c353c;"></div><div style="left:456.5px;top:822px;width:1px;height:7px;background:#c8c8c8"></div><div style="left:456.5px;top:828px;width:2px;height:1px;background:#c8c8c8"></div><div class="t " style="left:460px;top:824px;font-size:10px;line-height:10px;font-weight:bold;color:#f3ede4;">0:00</div><div style="left:495.7px;top:822px;width:1px;height:2px;background:#aaa"></div><div style="left:535.0px;top:822px;width:1px;height:2px;background:#aaa"></div><div style="left:574.2px;top:822px;width:1px;height:7px;background:#c8c8c8"></div><div style="left:574.2px;top:828px;width:2px;height:1px;background:#c8c8c8"></div><div class="t " style="left:577px;top:824px;font-size:10px;line-height:10px;font-weight:bold;color:#f3ede4;">0:15</div><div style="left:613.4px;top:822px;width:1px;height:2px;background:#aaa"></div><div style="left:652.6px;top:822px;width:1px;height:2px;background:#aaa"></div><div style="left:691.9px;top:822px;width:1px;height:7px;background:#c8c8c8"></div><div style="left:691.9px;top:828px;width:2px;height:1px;background:#c8c8c8"></div><div class="t " style="left:695px;top:824px;font-size:10px;line-height:10px;font-weight:bold;color:#f3ede4;">0:30</div><div style="left:731.1px;top:822px;width:1px;height:2px;background:#aaa"></div><div style="left:770.3px;top:822px;width:1px;height:2px;background:#aaa"></div><div style="left:809.5px;top:822px;width:1px;height:7px;background:#c8c8c8"></div><div style="left:809.5px;top:828px;width:2px;height:1px;background:#c8c8c8"></div><div class="t " style="left:813px;top:824px;font-size:10px;line-height:10px;font-weight:bold;color:#f3ede4;">0:45</div><div style="left:848.8px;top:822px;width:1px;height:2px;background:#aaa"></div><div style="left:888.0px;top:822px;width:1px;height:2px;background:#aaa"></div><div style="left:927.2px;top:822px;width:1px;height:7px;background:#c8c8c8"></div><div style="left:927.2px;top:828px;width:2px;height:1px;background:#c8c8c8"></div><div class="t " style="left:930px;top:824px;font-size:10px;line-height:10px;font-weight:bold;color:#f3ede4;">1:00</div><div style="left:966.5px;top:822px;width:1px;height:2px;background:#aaa"></div><div style="left:1005.7px;top:822px;width:1px;height:2px;background:#aaa"></div><div style="left:1044.9px;top:822px;width:1px;height:7px;background:#c8c8c8"></div><div style="left:1044.9px;top:828px;width:2px;height:1px;background:#c8c8c8"></div><div class="t " style="left:1048px;top:824px;font-size:10px;line-height:10px;font-weight:bold;color:#f3ede4;">1:15</div><div style="left:1084.1px;top:822px;width:1px;height:2px;background:#aaa"></div><div style="left:1123.4px;top:822px;width:1px;height:2px;background:#aaa"></div><div style="left:1162.6px;top:822px;width:1px;height:7px;background:#c8c8c8"></div><div style="left:1162.6px;top:828px;width:2px;height:1px;background:#c8c8c8"></div><div class="t " style="left:1166px;top:824px;font-size:10px;line-height:10px;font-weight:bold;color:#f3ede4;">1:30</div><div style="left:1201.8px;top:822px;width:1px;height:2px;background:#aaa"></div><div style="left:1241.0px;top:822px;width:1px;height:2px;background:#aaa"></div><div style="left:1280.3px;top:822px;width:1px;height:7px;background:#c8c8c8"></div><div style="left:1280.3px;top:828px;width:2px;height:1px;background:#c8c8c8"></div><div class="t " style="left:1283px;top:824px;font-size:10px;line-height:10px;font-weight:bold;color:#f3ede4;">1:45</div><div style="left:1319.5px;top:822px;width:1px;height:2px;background:#aaa"></div><div style="left:1358.7px;top:822px;width:1px;height:2px;background:#aaa"></div><div style="left:1397.9px;top:822px;width:1px;height:7px;background:#c8c8c8"></div><div style="left:1397.9px;top:828px;width:2px;height:1px;background:#c8c8c8"></div><div class="t " style="left:1401px;top:824px;font-size:10px;line-height:10px;font-weight:bold;color:#f3ede4;">2:00</div><div style="left:1437.2px;top:822px;width:1px;height:2px;background:#aaa"></div><div style="left:1476.4px;top:822px;width:1px;height:2px;background:#aaa"></div><div style="left:1515.6px;top:822px;width:1px;height:7px;background:#c8c8c8"></div><div style="left:1515.6px;top:828px;width:2px;height:1px;background:#c8c8c8"></div><div class="t " style="left:1519px;top:824px;font-size:10px;line-height:10px;font-weight:bold;color:#f3ede4;">2:15</div><div style="left:1554.9px;top:822px;width:1px;height:2px;background:#aaa"></div><div style="left:1594.1px;top:822px;width:1px;height:2px;background:#aaa"></div><div class="tri" style="left:640px;top:821px;border-width:0 5px 5px 5px;border-color:transparent transparent #f4f4f4 transparent"></div><div class="t " style="left:1564px;top:803px;font-size:17px;line-height:17px;font-weight:bold;color:#f3ede4;letter-spacing:1px">1/1</div><div class="t " style="left:1607px;top:85px;font-size:10px;line-height:10px;font-weight:bold;color:#f3ede4;">Set</div><svg style="left:1603px;top:99px" width="85" height="10"><path d="M2 5h7M5 2L2 5l3 3" stroke="#f3ede4" stroke-width="1.5" fill="none"/><path d="M18 5h7M22 2l3 3-3 3" stroke="#f3ede4" stroke-width="1.5" fill="none"/><path d="M47 8l5-5" stroke="#f3ede4" stroke-width="1.2"/><circle cx="47" cy="8" r="1.3" fill="#f3ede4"/><circle cx="52" cy="3" r="1.3" fill="#f3ede4"/><rect x="73" y="4.5" width="7" height="5" fill="#f3ede4"/><path d="M74.5 5V3a2 2 0 0 1 4 0v2" fill="none" stroke="#f3ede4" stroke-width="1.2"/></svg><div style="left:1599px;top:115px;width:286px;height:527px;background:#37434c;"></div><div style="left:1599px;top:643px;width:286px;height:120px;background:#37434c;"></div><div style="left:1599px;top:115px;width:93px;height:86px;background:#f4f2f2;"></div><svg style="left:1602px;top:117px" width="13" height="13"><circle cx="6.5" cy="6.5" r="5.8" fill="none" stroke="#6b6e72" stroke-width="1"/><path d="M3.5 5h6L6.5 9z" fill="#6b6e72"/></svg><div class="t " style="left:1622px;top:120px;font-size:10px;line-height:10px;font-weight:bold;color:#55595e;width:68px;overflow:hidden">1 MIDI</div><div style="left:1694px;top:115px;width:74px;height:86px;background:#333f47;"></div><div style="left:1696px;top:117px;width:70px;height:13px;background:#2d363d;"></div><div class="t " style="left:1698px;top:120px;font-size:10px;line-height:10px;font-weight:bold;color:#f3ede4;">All Ins</div><div class="tri" style="left:1757px;top:121px;border-width:5px 3.5px 0 3.5px;border-color:#f3ede4 transparent transparent transparent"></div><div style="left:1696px;top:134px;width:70px;height:13px;background:#2d363d;"></div><div class="t " style="left:1706px;top:137px;font-size:10px;line-height:10px;font-weight:bold;color:#f3ede4;width:50px;overflow:hidden">All Channe</div><div class="tri" style="left:1757px;top:138px;border-width:5px 3.5px 0 3.5px;border-color:#f3ede4 transparent transparent transparent"></div><div style="left:1696px;top:151px;width:17px;height:13px;background:#2d363d;"></div><div class="t " style="left:1700px;top:154px;font-size:10px;line-height:10px;font-weight:bold;color:#f3ede4;">In</div><div style="left:1717px;top:151px;width:25px;height:13px;background:#fdf3e6;"></div><div class="t " style="left:1718px;top:154px;font-size:10px;line-height:10px;font-weight:normal;color:#333;">Auto</div><div style="left:1746px;top:151px;width:20px;height:13px;background:#2d363d;"></div><div class="t " style="left:1747px;top:154px;font-size:10px;line-height:10px;font-weight:bold;color:#f3ede4;">Off</div><div style="left:1696px;top:168px;width:70px;height:13px;background:#2d363d;"></div><div class="t " style="left:1698px;top:171px;font-size:10px;line-height:10px;font-weight:bold;color:#f3ede4;">No Output</div><div class="tri" style="left:1757px;top:172px;border-width:5px 3.5px 0 3.5px;border-color:#f3ede4 transparent transparent transparent"></div><div style="left:1696px;top:185px;width:70px;height:13px;background:#343f47;box-sizing:border-box;border:1px solid #2e383f"></div><div style="left:1770px;top:115px;width:115px;height:86px;background:#36424b;"></div><div style="left:1774px;top:118px;width:44px;height:11px;background:#fdf3e6;"></div><div class="t " style="left:1774px;top:119px;font-size:10px;line-height:10px;font-weight:bold;color:#3a3a3a;width:44px;text-align:center">1</div><div style="left:1823px;top:117px;width:21px;height:13px;background:#2d363d;"></div><div class="t " style="left:1823px;top:120px;font-size:10px;line-height:10px;font-weight:bold;color:#f3ede4;width:21px;text-align:center">S</div><div style="left:1849px;top:117px;width:19px;height:13px;background:#2d363d;"></div><svg style="left:1853px;top:119px" width="10" height="10"><circle cx="5" cy="5" r="4" fill="#f3ede4"/><path d="M5 2v3l-2 2" stroke="#2d363d" stroke-width="1.2" fill="none"/></svg><svg style="left:1876px;top:116px" width="7" height="84"><circle cx="3.5" cy="4" r="2.6" fill="#2f3a41"/><circle cx="3.5" cy="12" r="2.6" fill="#2f3a41"/><circle cx="3.5" cy="20" r="2.6" fill="#2f3a41"/><circle cx="3.5" cy="28" r="2.6" fill="#2f3a41"/><circle cx="3.5" cy="36" r="2.6" fill="#2f3a41"/><circle cx="3.5" cy="44" r="2.6" fill="#2f3a41"/><circle cx="3.5" cy="52" r="2.6" fill="#2f3a41"/><circle cx="3.5" cy="60" r="2.6" fill="#2f3a41"/><circle cx="3.5" cy="68" r="2.6" fill="#2f3a41"/><circle cx="3.5" cy="76" r="2.6" fill="#2f3a41"/></svg><div style="left:1599px;top:203px;width:93px;height:86px;background:#f4f2f2;"></div><svg style="left:1602px;top:205px" width="13" height="13"><circle cx="6.5" cy="6.5" r="5.8" fill="none" stroke="#6b6e72" stroke-width="1"/><path d="M3.5 5h6L6.5 9z" fill="#6b6e72"/></svg><div class="t " style="left:1622px;top:208px;font-size:10px;line-height:10px;font-weight:bold;color:#55595e;width:68px;overflow:hidden">2 MIDI</div><div style="left:1694px;top:203px;width:74px;height:86px;background:#333f47;"></div><div style="left:1696px;top:205px;width:70px;height:13px;background:#2d363d;"></div><div class="t " style="left:1698px;top:208px;font-size:10px;line-height:10px;font-weight:bold;color:#f3ede4;">All Ins</div><div class="tri" style="left:1757px;top:209px;border-width:5px 3.5px 0 3.5px;border-color:#f3ede4 transparent transparent transparent"></div><div style="left:1696px;top:222px;width:70px;height:13px;background:#2d363d;"></div><div class="t " style="left:1706px;top:225px;font-size:10px;line-height:10px;font-weight:bold;color:#f3ede4;width:50px;overflow:hidden">All Channe</div><div class="tri" style="left:1757px;top:226px;border-width:5px 3.5px 0 3.5px;border-color:#f3ede4 transparent transparent transparent"></div><div style="left:1696px;top:239px;width:17px;height:13px;background:#2d363d;"></div><div class="t " style="left:1700px;top:242px;font-size:10px;line-height:10px;font-weight:bold;color:#f3ede4;">In</div><div style="left:1717px;top:239px;width:25px;height:13px;background:#fdf3e6;"></div><div class="t " style="left:1718px;top:242px;font-size:10px;line-height:10px;font-weight:normal;color:#333;">Auto</div><div style="left:1746px;top:239px;width:20px;height:13px;background:#2d363d;"></div><div class="t " style="left:1747px;top:242px;font-size:10px;line-height:10px;font-weight:bold;color:#f3ede4;">Off</div><div style="left:1696px;top:256px;width:70px;height:13px;background:#2d363d;"></div><div class="t " style="left:1698px;top:259px;font-size:10px;line-height:10px;font-weight:bold;color:#f3ede4;">No Output</div><div class="tri" style="left:1757px;top:260px;border-width:5px 3.5px 0 3.5px;border-color:#f3ede4 transparent transparent transparent"></div><div style="left:1696px;top:273px;width:70px;height:13px;background:#343f47;box-sizing:border-box;border:1px solid #2e383f"></div><div style="left:1770px;top:203px;width:115px;height:86px;background:#36424b;"></div><div style="left:1774px;top:206px;width:44px;height:11px;background:#fdf3e6;"></div><div class="t " style="left:1774px;top:207px;font-size:10px;line-height:10px;font-weight:bold;color:#3a3a3a;width:44px;text-align:center">2</div><div style="left:1823px;top:205px;width:21px;height:13px;background:#2d363d;"></div><div class="t " style="left:1823px;top:208px;font-size:10px;line-height:10px;font-weight:bold;color:#f3ede4;width:21px;text-align:center">S</div><div style="left:1849px;top:205px;width:19px;height:13px;background:#2d363d;"></div><svg style="left:1853px;top:207px" width="10" height="10"><circle cx="5" cy="5" r="4" fill="#f3ede4"/><path d="M5 2v3l-2 2" stroke="#2d363d" stroke-width="1.2" fill="none"/></svg><svg style="left:1876px;top:204px" width="7" height="84"><circle cx="3.5" cy="4" r="2.6" fill="#2f3a41"/><circle cx="3.5" cy="12" r="2.6" fill="#2f3a41"/><circle cx="3.5" cy="20" r="2.6" fill="#2f3a41"/><circle cx="3.5" cy="28" r="2.6" fill="#2f3a41"/><circle cx="3.5" cy="36" r="2.6" fill="#2f3a41"/><circle cx="3.5" cy="44" r="2.6" fill="#2f3a41"/><circle cx="3.5" cy="52" r="2.6" fill="#2f3a41"/><circle cx="3.5" cy="60" r="2.6" fill="#2f3a41"/><circle cx="3.5" cy="68" r="2.6" fill="#2f3a41"/><circle cx="3.5" cy="76" r="2.6" fill="#2f3a41"/></svg><div style="left:1599px;top:291px;width:93px;height:86px;background:#f4f2f2;"></div><svg style="left:1602px;top:293px" width="13" height="13"><circle cx="6.5" cy="6.5" r="5.8" fill="none" stroke="#6b6e72" stroke-width="1"/><path d="M3.5 5h6L6.5 9z" fill="#6b6e72"/></svg><div class="t " style="left:1622px;top:296px;font-size:10px;line-height:10px;font-weight:bold;color:#55595e;width:68px;overflow:hidden">3 MIDI</div><div style="left:1694px;top:291px;width:74px;height:86px;background:#333f47;"></div><div style="left:1696px;top:293px;width:70px;height:13px;background:#2d363d;"></div><div class="t " style="left:1698px;top:296px;font-size:10px;line-height:10px;font-weight:bold;color:#f3ede4;">All Ins</div><div class="tri" style="left:1757px;top:297px;border-width:5px 3.5px 0 3.5px;border-color:#f3ede4 transparent transparent transparent"></div><div style="left:1696px;top:310px;width:70px;height:13px;background:#2d363d;"></div><div class="t " style="left:1706px;top:313px;font-size:10px;line-height:10px;font-weight:bold;color:#f3ede4;width:50px;overflow:hidden">All Channe</div><div class="tri" style="left:1757px;top:314px;border-width:5px 3.5px 0 3.5px;border-color:#f3ede4 transparent transparent transparent"></div><div style="left:1696px;top:327px;width:17px;height:13px;background:#2d363d;"></div><div class="t " style="left:1700px;top:330px;font-size:10px;line-height:10px;font-weight:bold;color:#f3ede4;">In</div><div style="left:1717px;top:327px;width:25px;height:13px;background:#fdf3e6;"></div><div class="t " style="left:1718px;top:330px;font-size:10px;line-height:10px;font-weight:normal;color:#333;">Auto</div><div style="left:1746px;top:327px;width:20px;height:13px;background:#2d363d;"></div><div class="t " style="left:1747px;top:330px;font-size:10px;line-height:10px;font-weight:bold;color:#f3ede4;">Off</div><div style="left:1696px;top:344px;width:70px;height:13px;background:#2d363d;"></div><div class="t " style="left:1698px;top:347px;font-size:10px;line-height:10px;font-weight:bold;color:#f3ede4;">No Output</div><div class="tri" style="left:1757px;top:348px;border-width:5px 3.5px 0 3.5px;border-color:#f3ede4 transparent transparent transparent"></div><div style="left:1696px;top:361px;width:70px;height:13px;background:#343f47;box-sizing:border-box;border:1px solid #2e383f"></div><div style="left:1770px;top:291px;width:115px;height:86px;background:#36424b;"></div><div style="left:1774px;top:294px;width:44px;height:11px;background:#fdf3e6;"></div><div class="t " style="left:1774px;top:295px;font-size:10px;line-height:10px;font-weight:bold;color:#3a3a3a;width:44px;text-align:center">3</div><div style="left:1823px;top:293px;width:21px;height:13px;background:#2d363d;"></div><div class="t " style="left:1823px;top:296px;font-size:10px;line-height:10px;font-weight:bold;color:#f3ede4;width:21px;text-align:center">S</div><div style="left:1849px;top:293px;width:19px;height:13px;background:#2d363d;"></div><svg style="left:1853px;top:295px" width="10" height="10"><circle cx="5" cy="5" r="4" fill="#f3ede4"/><path d="M5 2v3l-2 2" stroke="#2d363d" stroke-width="1.2" fill="none"/></svg><svg style="left:1876px;top:292px" width="7" height="84"><circle cx="3.5" cy="4" r="2.6" fill="#2f3a41"/><circle cx="3.5" cy="12" r="2.6" fill="#2f3a41"/><circle cx="3.5" cy="20" r="2.6" fill="#2f3a41"/><circle cx="3.5" cy="28" r="2.6" fill="#2f3a41"/><circle cx="3.5" cy="36" r="2.6" fill="#2f3a41"/><circle cx="3.5" cy="44" r="2.6" fill="#2f3a41"/><circle cx="3.5" cy="52" r="2.6" fill="#2f3a41"/><circle cx="3.5" cy="60" r="2.6" fill="#2f3a41"/><circle cx="3.5" cy="68" r="2.6" fill="#2f3a41"/><circle cx="3.5" cy="76" r="2.6" fill="#2f3a41"/></svg><div style="left:1599px;top:379px;width:93px;height:86px;background:#f4f2f2;"></div><svg style="left:1602px;top:381px" width="13" height="13"><circle cx="6.5" cy="6.5" r="5.8" fill="none" stroke="#6b6e72" stroke-width="1"/><path d="M3.5 5h6L6.5 9z" fill="#6b6e72"/></svg><div class="t " style="left:1622px;top:384px;font-size:10px;line-height:10px;font-weight:bold;color:#55595e;width:68px;overflow:hidden">4 Dual OSC Vi</div><div style="left:1694px;top:379px;width:74px;height:86px;background:#333f47;"></div><div style="left:1696px;top:381px;width:70px;height:13px;background:#2d363d;"></div><div class="t " style="left:1698px;top:384px;font-size:10px;line-height:10px;font-weight:bold;color:#f3ede4;">All Ins</div><div class="tri" style="left:1757px;top:385px;border-width:5px 3.5px 0 3.5px;border-color:#f3ede4 transparent transparent transparent"></div><div style="left:1696px;top:398px;width:70px;height:13px;background:#2d363d;"></div><div class="t " style="left:1706px;top:401px;font-size:10px;line-height:10px;font-weight:bold;color:#f3ede4;width:50px;overflow:hidden">All Channe</div><div class="tri" style="left:1757px;top:402px;border-width:5px 3.5px 0 3.5px;border-color:#f3ede4 transparent transparent transparent"></div><div style="left:1696px;top:415px;width:17px;height:13px;background:#2d363d;"></div><div class="t " style="left:1700px;top:418px;font-size:10px;line-height:10px;font-weight:bold;color:#f3ede4;">In</div><div style="left:1717px;top:415px;width:25px;height:13px;background:#fdf3e6;"></div><div class="t " style="left:1718px;top:418px;font-size:10px;line-height:10px;font-weight:normal;color:#333;">Auto</div><div style="left:1746px;top:415px;width:20px;height:13px;background:#2d363d;"></div><div class="t " style="left:1747px;top:418px;font-size:10px;line-height:10px;font-weight:bold;color:#f3ede4;">Off</div><div style="left:1696px;top:432px;width:70px;height:13px;background:#2d363d;"></div><div class="t " style="left:1698px;top:435px;font-size:10px;line-height:10px;font-weight:bold;color:#f3ede4;">Master</div><div class="tri" style="left:1757px;top:436px;border-width:5px 3.5px 0 3.5px;border-color:#f3ede4 transparent transparent transparent"></div><div style="left:1696px;top:449px;width:70px;height:13px;background:#343f47;box-sizing:border-box;border:1px solid #2e383f"></div><div style="left:1770px;top:379px;width:115px;height:86px;background:#36424b;"></div><div style="left:1774px;top:382px;width:44px;height:11px;background:#fdf3e6;"></div><div class="t " style="left:1774px;top:383px;font-size:10px;line-height:10px;font-weight:bold;color:#3a3a3a;width:44px;text-align:center">4</div><div style="left:1823px;top:381px;width:21px;height:13px;background:#2d363d;"></div><div class="t " style="left:1823px;top:384px;font-size:10px;line-height:10px;font-weight:bold;color:#f3ede4;width:21px;text-align:center">S</div><div style="left:1849px;top:382px;width:19px;height:11px;background:#f0643a;"></div><svg style="left:1853px;top:383px" width="10" height="10"><circle cx="5" cy="5" r="4" fill="#3a2a22"/><path d="M5 2v3l-2 2" stroke="#f0643a" stroke-width="1.2" fill="none"/></svg><div style="left:1774px;top:399px;width:37px;height:11px;background:#56687a;"></div><div style="left:1811px;top:399px;width:8px;height:12px;background:#2d363d;"></div><div class="t " style="left:1774px;top:400px;font-size:10px;line-height:10px;font-weight:bold;color:#f3ede4;width:37px;text-align:center">0</div><div style="left:1823px;top:398px;width:46px;height:13px;background:#2d363d;"></div><div class="t " style="left:1823px;top:401px;font-size:10px;line-height:10px;font-weight:bold;color:#f3ede4;width:46px;text-align:center">C</div><div style="left:1773px;top:416px;width:29px;height:12px;background:#2d363d;"></div><div class="t " style="left:1773px;top:418px;font-size:10px;line-height:10px;font-weight:bold;color:#f3ede4;width:29px;text-align:center">-inf</div><div style="left:1806px;top:416px;width:30px;height:12px;background:#2d363d;"></div><div class="t " style="left:1806px;top:418px;font-size:10px;line-height:10px;font-weight:bold;color:#f3ede4;width:30px;text-align:center">-inf</div><div style="left:1874px;top:381px;width:3px;height:82px;background:#2f3a41;"></div><div style="left:1879px;top:381px;width:3px;height:82px;background:#2f3a41;"></div><div style="left:1599px;top:467px;width:93px;height:86px;background:#f4f2f2;"></div><svg style="left:1602px;top:469px" width="13" height="13"><circle cx="6.5" cy="6.5" r="5.8" fill="none" stroke="#6b6e72" stroke-width="1"/><path d="M3.5 5h6L6.5 9z" fill="#6b6e72"/></svg><div class="t " style="left:1622px;top:472px;font-size:10px;line-height:10px;font-weight:bold;color:#55595e;width:68px;overflow:hidden">5 Audio</div><div style="left:1694px;top:467px;width:74px;height:86px;background:#333f47;"></div><div style="left:1696px;top:469px;width:70px;height:13px;background:#2d363d;"></div><div class="t " style="left:1698px;top:472px;font-size:10px;line-height:10px;font-weight:bold;color:#f3ede4;">Ext. In</div><div class="tri" style="left:1757px;top:473px;border-width:5px 3.5px 0 3.5px;border-color:#f3ede4 transparent transparent transparent"></div><div style="left:1696px;top:486px;width:70px;height:13px;background:#2d363d;"></div><div class="t " style="left:1708px;top:489px;font-size:10px;line-height:10px;font-weight:bold;color:#f3ede4;">1</div><div class="tri" style="left:1757px;top:490px;border-width:5px 3.5px 0 3.5px;border-color:#f3ede4 transparent transparent transparent"></div><div style="left:1696px;top:503px;width:17px;height:13px;background:#2d363d;"></div><div class="t " style="left:1700px;top:506px;font-size:10px;line-height:10px;font-weight:bold;color:#f3ede4;">In</div><div style="left:1717px;top:503px;width:25px;height:13px;background:#2d363d;"></div><div class="t " style="left:1718px;top:506px;font-size:10px;line-height:10px;font-weight:bold;color:#f3ede4;">Auto</div><div style="left:1746px;top:503px;width:20px;height:13px;background:#fdf3e6;"></div><div class="t " style="left:1747px;top:506px;font-size:10px;line-height:10px;font-weight:normal;color:#333;">Off</div><div style="left:1696px;top:520px;width:70px;height:13px;background:#2d363d;"></div><div class="t " style="left:1698px;top:523px;font-size:10px;line-height:10px;font-weight:bold;color:#f3ede4;">Master</div><div class="tri" style="left:1757px;top:524px;border-width:5px 3.5px 0 3.5px;border-color:#f3ede4 transparent transparent transparent"></div><div style="left:1696px;top:537px;width:70px;height:13px;background:#343f47;box-sizing:border-box;border:1px solid #2e383f"></div><div style="left:1770px;top:467px;width:115px;height:86px;background:#36424b;"></div><div style="left:1774px;top:470px;width:44px;height:11px;background:#fdf3e6;"></div><div class="t " style="left:1774px;top:471px;font-size:10px;line-height:10px;font-weight:bold;color:#3a3a3a;width:44px;text-align:center">5</div><div style="left:1823px;top:469px;width:21px;height:13px;background:#2d363d;"></div><div class="t " style="left:1823px;top:472px;font-size:10px;line-height:10px;font-weight:bold;color:#f3ede4;width:21px;text-align:center">S</div><div style="left:1849px;top:469px;width:19px;height:13px;background:#2d363d;"></div><div style="left:1854px;top:472px;width:8px;height:8px;background:#f3ede4;border-radius:50%"></div><div style="left:1774px;top:487px;width:37px;height:11px;background:#56687a;"></div><div style="left:1811px;top:487px;width:8px;height:12px;background:#2d363d;"></div><div class="t " style="left:1774px;top:488px;font-size:10px;line-height:10px;font-weight:bold;color:#f3ede4;width:37px;text-align:center">0</div><div style="left:1823px;top:486px;width:46px;height:13px;background:#2d363d;"></div><div class="t " style="left:1823px;top:489px;font-size:10px;line-height:10px;font-weight:bold;color:#f3ede4;width:46px;text-align:center">C</div><div style="left:1773px;top:504px;width:29px;height:12px;background:#2d363d;"></div><div class="t " style="left:1773px;top:506px;font-size:10px;line-height:10px;font-weight:bold;color:#f3ede4;width:29px;text-align:center">-inf</div><div style="left:1806px;top:504px;width:30px;height:12px;background:#2d363d;"></div><div class="t " style="left:1806px;top:506px;font-size:10px;line-height:10px;font-weight:bold;color:#f3ede4;width:30px;text-align:center">-inf</div><div style="left:1874px;top:469px;width:3px;height:82px;background:#2f3a41;"></div><div style="left:1879px;top:469px;width:3px;height:82px;background:#2f3a41;"></div><div style="left:1599px;top:555px;width:93px;height:86px;background:#f4f2f2;"></div><svg style="left:1602px;top:557px" width="13" height="13"><circle cx="6.5" cy="6.5" r="5.8" fill="none" stroke="#6b6e72" stroke-width="1"/><path d="M3.5 5h6L6.5 9z" fill="#6b6e72"/></svg><div class="t " style="left:1622px;top:560px;font-size:10px;line-height:10px;font-weight:bold;color:#55595e;width:68px;overflow:hidden">6 Audio</div><div style="left:1694px;top:555px;width:74px;height:86px;background:#333f47;"></div><div style="left:1696px;top:557px;width:70px;height:13px;background:#2d363d;"></div><div class="t " style="left:1698px;top:560px;font-size:10px;line-height:10px;font-weight:bold;color:#f3ede4;">Ext. In</div><div class="tri" style="left:1757px;top:561px;border-width:5px 3.5px 0 3.5px;border-color:#f3ede4 transparent transparent transparent"></div><div style="left:1696px;top:574px;width:70px;height:13px;background:#2d363d;"></div><div class="t " style="left:1708px;top:577px;font-size:10px;line-height:10px;font-weight:bold;color:#f3ede4;">2</div><div class="tri" style="left:1757px;top:578px;border-width:5px 3.5px 0 3.5px;border-color:#f3ede4 transparent transparent transparent"></div><div style="left:1696px;top:591px;width:17px;height:13px;background:#2d363d;"></div><div class="t " style="left:1700px;top:594px;font-size:10px;line-height:10px;font-weight:bold;color:#f3ede4;">In</div><div style="left:1717px;top:591px;width:25px;height:13px;background:#2d363d;"></div><div class="t " style="left:1718px;top:594px;font-size:10px;line-height:10px;font-weight:bold;color:#f3ede4;">Auto</div><div style="left:1746px;top:591px;width:20px;height:13px;background:#fdf3e6;"></div><div class="t " style="left:1747px;top:594px;font-size:10px;line-height:10px;font-weight:normal;color:#333;">Off</div><div style="left:1696px;top:608px;width:70px;height:13px;background:#2d363d;"></div><div class="t " style="left:1698px;top:611px;font-size:10px;line-height:10px;font-weight:bold;color:#f3ede4;">Master</div><div class="tri" style="left:1757px;top:612px;border-width:5px 3.5px 0 3.5px;border-color:#f3ede4 transparent transparent transparent"></div><div style="left:1696px;top:625px;width:70px;height:13px;background:#343f47;box-sizing:border-box;border:1px solid #2e383f"></div><div style="left:1770px;top:555px;width:115px;height:86px;background:#36424b;"></div><div style="left:1774px;top:558px;width:44px;height:11px;background:#fdf3e6;"></div><div class="t " style="left:1774px;top:559px;font-size:10px;line-height:10px;font-weight:bold;color:#3a3a3a;width:44px;text-align:center">6</div><div style="left:1823px;top:557px;width:21px;height:13px;background:#2d363d;"></div><div class="t " style="left:1823px;top:560px;font-size:10px;line-height:10px;font-weight:bold;color:#f3ede4;width:21px;text-align:center">S</div><div style="left:1849px;top:557px;width:19px;height:13px;background:#2d363d;"></div><div style="left:1854px;top:560px;width:8px;height:8px;background:#f3ede4;border-radius:50%"></div><div style="left:1774px;top:575px;width:37px;height:11px;background:#56687a;"></div><div style="left:1811px;top:575px;width:8px;height:12px;background:#2d363d;"></div><div class="t " style="left:1774px;top:576px;font-size:10px;line-height:10px;font-weight:bold;color:#f3ede4;width:37px;text-align:center">0</div><div style="left:1823px;top:574px;width:46px;height:13px;background:#2d363d;"></div><div class="t " style="left:1823px;top:577px;font-size:10px;line-height:10px;font-weight:bold;color:#f3ede4;width:46px;text-align:center">C</div><div style="left:1773px;top:592px;width:29px;height:12px;background:#2d363d;"></div><div class="t " style="left:1773px;top:594px;font-size:10px;line-height:10px;font-weight:bold;color:#f3ede4;width:29px;text-align:center">-inf</div><div style="left:1806px;top:592px;width:30px;height:12px;background:#2d363d;"></div><div class="t " style="left:1806px;top:594px;font-size:10px;line-height:10px;font-weight:bold;color:#f3ede4;width:30px;text-align:center">-inf</div><div style="left:1874px;top:557px;width:3px;height:82px;background:#2f3a41;"></div><div style="left:1879px;top:557px;width:3px;height:82px;background:#2f3a41;"></div><div style="left:1599px;top:766px;width:93px;height:17px;background:#f4f2f2;"></div><svg style="left:1601px;top:768px" width="13" height="13"><circle cx="6.5" cy="6.5" r="5.8" fill="none" stroke="#6b6e72" stroke-width="1"/><path d="M5 3.8v5.4L9 6.5z" fill="#6b6e72"/></svg><div class="t " style="left:1622px;top:770px;font-size:10px;line-height:10px;font-weight:bold;color:#55595e;">A Reverb</div><div style="left:1694px;top:766px;width:74px;height:17px;background:#333f47;"></div><div style="left:1770px;top:766px;width:115px;height:17px;background:#36424b;"></div><div style="left:1696px;top:768px;width:70px;height:13px;background:#343f47;box-sizing:border-box;border:1px solid #2e383f"></div><div style="left:1774px;top:769px;width:44px;height:11px;background:#fdf3e6;"></div><div class="t " style="left:1774px;top:770px;font-size:10px;line-height:10px;font-weight:bold;color:#3a3a3a;width:44px;text-align:center">A</div><div style="left:1823px;top:768px;width:17px;height:13px;background:#2d363d;"></div><div class="t " style="left:1823px;top:771px;font-size:10px;line-height:10px;font-weight:bold;color:#f3ede4;width:17px;text-align:center">S</div><div style="left:1845px;top:769px;width:23px;height:11px;background:#fdf3e6;"></div><div class="t " style="left:1845px;top:770px;font-size:10px;line-height:10px;font-weight:normal;color:#333;width:23px;text-align:center">Post</div><div style="left:1875px;top:767px;width:3px;height:15px;background:#2f3a41;"></div><div style="left:1880px;top:767px;width:3px;height:15px;background:#2f3a41;"></div><div style="left:1599px;top:785px;width:93px;height:17px;background:#f4f2f2;"></div><svg style="left:1601px;top:787px" width="13" height="13"><circle cx="6.5" cy="6.5" r="5.8" fill="none" stroke="#6b6e72" stroke-width="1"/><path d="M5 3.8v5.4L9 6.5z" fill="#6b6e72"/></svg><div class="t " style="left:1622px;top:789px;font-size:10px;line-height:10px;font-weight:bold;color:#55595e;">B Delay</div><div style="left:1694px;top:785px;width:74px;height:17px;background:#333f47;"></div><div style="left:1770px;top:785px;width:115px;height:17px;background:#36424b;"></div><div style="left:1696px;top:787px;width:70px;height:13px;background:#343f47;box-sizing:border-box;border:1px solid #2e383f"></div><div style="left:1774px;top:788px;width:44px;height:11px;background:#fdf3e6;"></div><div class="t " style="left:1774px;top:789px;font-size:10px;line-height:10px;font-weight:bold;color:#3a3a3a;width:44px;text-align:center">B</div><div style="left:1823px;top:787px;width:17px;height:13px;background:#2d363d;"></div><div class="t " style="left:1823px;top:790px;font-size:10px;line-height:10px;font-weight:bold;color:#f3ede4;width:17px;text-align:center">S</div><div style="left:1845px;top:788px;width:23px;height:11px;background:#fdf3e6;"></div><div class="t " style="left:1845px;top:789px;font-size:10px;line-height:10px;font-weight:normal;color:#333;width:23px;text-align:center">Post</div><div style="left:1875px;top:786px;width:3px;height:15px;background:#2f3a41;"></div><div style="left:1880px;top:786px;width:3px;height:15px;background:#2f3a41;"></div><div style="left:1599px;top:804px;width:93px;height:17px;background:#f4f2f2;"></div><svg style="left:1601px;top:806px" width="13" height="13"><circle cx="6.5" cy="6.5" r="5.8" fill="none" stroke="#6b6e72" stroke-width="1"/><path d="M5 3.8v5.4L9 6.5z" fill="#6b6e72"/></svg><div class="t " style="left:1624px;top:808px;font-size:10px;line-height:10px;font-weight:bold;color:#55595e;">Master</div><div style="left:1694px;top:804px;width:74px;height:17px;background:#333f47;"></div><div style="left:1770px;top:804px;width:115px;height:17px;background:#36424b;"></div><div style="left:1696px;top:806px;width:70px;height:13px;background:#2d363d;"></div><div class="t " style="left:1708px;top:809px;font-size:10px;line-height:10px;font-weight:bold;color:#f3ede4;">1/2</div><div class="tri" style="left:1757px;top:810px;border-width:5px 3.5px 0 3.5px;border-color:#f3ede4 transparent transparent transparent"></div><div style="left:1774px;top:807px;width:37px;height:11px;background:#56687a;"></div><div style="left:1811px;top:806px;width:8px;height:13px;background:#2d363d;"></div><div class="t " style="left:1774px;top:808px;font-size:10px;line-height:10px;font-weight:bold;color:#f3ede4;width:37px;text-align:center">0</div><div style="left:1824px;top:807px;width:37px;height:11px;background:#8fa3b0;"></div><div style="left:1861px;top:806px;width:8px;height:13px;background:#2d363d;"></div><div class="t " style="left:1824px;top:808px;font-size:10px;line-height:10px;font-weight:bold;color:#f3ede4;width:37px;text-align:center">0</div><div style="left:1875px;top:805px;width:3px;height:15px;background:#2f3a41;"></div><div style="left:1880px;top:805px;width:3px;height:15px;background:#2f3a41;"></div><div style="left:1892px;top:742px;width:13px;height:13px;background:#f4f2f2;border-radius:50%"></div><div class="t " style="left:1892px;top:745px;font-size:7px;line-height:7px;font-weight:bold;color:#333;width:13px;text-align:center">I·O</div><div style="left:1892px;top:761px;width:13px;height:13px;background:#f4f2f2;border-radius:50%"></div><div class="t " style="left:1892px;top:764px;font-size:7px;line-height:7px;font-weight:bold;color:#333;width:13px;text-align:center">R</div><div style="left:1892px;top:780px;width:13px;height:13px;background:#f4f2f2;border-radius:50%"></div><div class="t " style="left:1892px;top:783px;font-size:7px;line-height:7px;font-weight:bold;color:#333;width:13px;text-align:center">M</div><div style="left:1892px;top:799px;width:13px;height:13px;background:#c8c8c8;border-radius:50%"></div><div class="t " style="left:1892px;top:802px;font-size:7px;line-height:7px;font-weight:bold;color:#333;width:13px;text-align:center">D</div><div style="left:1898px;top:62px;width:1px;height:10px;background:#3c474f;"></div><div style="left:1901px;top:62px;width:1px;height:10px;background:#3c474f;"></div><div style="left:1904px;top:62px;width:1px;height:10px;background:#3c474f;"></div><div style="left:12px;top:850px;width:192px;height:191px;background:#37434c;"></div><div class="t " style="left:17px;top:854px;font-size:10px;line-height:10px;font-weight:bold;color:#f3ede4;-webkit-text-stroke:0.35px #f3ede4">メインレーン</div><div class="t " style="left:17px;top:871px;font-size:10px;line-height:10px;font-weight:bold;color:#f3ede4;white-space:nowrap">通常トラックのミキサーを通じて再生さ</div><div class="t " style="left:17px;top:886px;font-size:10px;line-height:10px;font-weight:bold;color:#f3ede4;white-space:nowrap">れる全クリップが表示されます。ドラッ</div><div class="t " style="left:17px;top:901px;font-size:10px;line-height:10px;font-weight:bold;color:#f3ede4;white-space:nowrap">グして時間を選択し、[編集]メニューの</div><div class="t " style="left:17px;top:916px;font-size:10px;line-height:10px;font-weight:bold;color:#f3ede4;white-space:nowrap">コマンドを使用して編集します。</div><div class="t " style="left:17px;top:931px;font-size:10px;line-height:10px;font-weight:bold;color:#f3ede4;white-space:nowrap"></div><div class="t " style="left:17px;top:946px;font-size:10px;line-height:10px;font-weight:bold;color:#f3ede4;white-space:nowrap">[Ctrl + 矢印上下<i>]</i> 前次のテイクレーンか</div><div class="t " style="left:17px;top:961px;font-size:10px;line-height:10px;font-weight:bold;color:#f3ede4;white-space:nowrap">らクリップを挿入</div><div class="t " style="left:17px;top:976px;font-size:10px;line-height:10px;font-weight:bold;color:#f3ede4;white-space:nowrap"><i>[Ctrl + Alt+</i>ドラッグ<i>]</i> ディスプレイをス</div><div class="t " style="left:17px;top:991px;font-size:10px;line-height:10px;font-weight:bold;color:#f3ede4;white-space:nowrap">クロール</div><div class="t " style="left:17px;top:1006px;font-size:10px;line-height:10px;font-weight:bold;color:#f3ede4;white-space:nowrap"><i>[Ctrl+</i>スクロールホイール<i>]</i> ズームイン</div><div class="t " style="left:17px;top:1021px;font-size:10px;line-height:10px;font-weight:bold;color:#f3ede4;white-space:nowrap">アウト</div><div class="t " style="left:17px;top:1036px;font-size:10px;line-height:10px;font-weight:bold;color:#f3ede4;white-space:nowrap"><i>[Alt + </i>スクロールホイール<i>]</i> レーン高さ</div><div style="left:12px;top:1041px;width:192px;height:8px;background:#2c353c;"></div><div style="left:231px;top:850px;width:710px;height:188px;background:#37434c;border-radius:4px"></div><div style="left:952px;top:850px;width:396px;height:188px;background:#37434c;border-radius:4px"></div><div style="left:1357px;top:850px;width:396px;height:188px;background:#37434c;border-radius:4px"></div><div style="left:1763px;top:850px;width:145px;height:188px;background:#37434c;border-radius:4px"></div><div class="tri" style="left:12px;top:1054px;border-width:0 6px 11px 6px;border-color:transparent transparent #3b464e transparent"></div><div style="left:38px;top:1052px;width:1359px;height:17px;background:#37434c;"></div><div class="t " style="left:45px;top:1056px;font-size:10px;line-height:10px;font-weight:bold;color:#f3ede4;">挿入マーク 13.1.1 (時間: 0:24)</div><div style="left:1411px;top:1053px;width:200px;height:16px;background:#495761;"></div><div class="t " style="left:1626px;top:1056px;font-size:10px;line-height:10px;font-weight:bold;color:#f3ede4;">4-Dual OSC Vibrato Bass</div><div class="tri" style="left:1897px;top:1054px;border-width:0 6px 11px 6px;border-color:transparent transparent #3b464e transparent"></div><div style="left:235px;top:853px;width:11px;height:11px;background:#f3ede4;border-radius:50%"></div><div class="t " style="left:251px;top:855px;font-size:10px;line-height:10px;font-weight:bold;color:#f3ede4;">Dual OSC Vibrato Bass</div><div style="left:237px;top:874px;width:28px;height:11px;background:#fdf3e6;"></div><div class="t " style="left:237px;top:875px;font-size:10px;line-height:10px;font-weight:normal;color:#333;width:28px;text-align:center">Osc1</div><div style="left:270px;top:873px;width:39px;height:13px;background:#2d363d;"></div><div style="left:270px;top:874px;width:31px;height:11px;background:#4d5d69;"></div><div class="t " style="left:270px;top:875px;font-size:10px;line-height:10px;font-weight:bold;color:#f3ede4;width:39px;text-align:center">0.0 dB</div><div class="t " style="left:237px;top:892px;font-size:10px;line-height:10px;font-weight:bold;color:#f3ede4;">F1/F2</div><div style="left:269px;top:889px;width:40px;height:13px;background:#2d363d;"></div><div class="t " style="left:283px;top:892px;font-size:10px;line-height:10px;font-weight:bold;color:#f3ede4;">F1</div><div class="tri" style="left:298px;top:891px;border-width:4.5px 6px 4.5px 0;border-color:transparent #f3ede4 transparent transparent"></div><div class="t " style="left:316px;top:871px;font-size:10px;line-height:10px;font-weight:bold;color:#f3ede4;">Shape</div><div style="left:317px;top:882px;width:31px;height:13px;background:#2d363d;"></div><svg style="left:319px;top:884px" width="18" height="9"><path d="M1 8V1l14 6" stroke="#f3ede4" stroke-width="1" fill="none"/></svg><div class="tri" style="left:338px;top:886px;border-width:4px 3.5px 0 3.5px;border-color:#f3ede4 transparent transparent transparent"></div><div class="t " style="left:357px;top:871px;font-size:10px;line-height:10px;font-weight:bold;color:#f3ede4;">Octave</div><div class="t " style="left:398px;top:871px;font-size:10px;line-height:10px;font-weight:bold;color:#f3ede4;">Semi</div><div class="t " style="left:444px;top:871px;font-size:10px;line-height:10px;font-weight:bold;color:#f3ede4;">Detune</div><svg style="left:354.0px;top:877.0px;overflow:visible" width="30" height="30"><g transform="translate(15,15)"><circle cx="0" cy="0" r="9" fill="none" stroke="#2b353b" stroke-width="1.5"/><path d="M-6.36 6.36A9 9 0 0 1 -6.36 -6.36" fill="none" stroke="#f3ede4" stroke-width="2"/><path d="M0.00 0.00L-6.72 6.72" stroke="#f3ede4" stroke-width="2.2" stroke-linecap="butt"/><path d="M-11.8 -7.3L-7.3 -11.8L-7.3 -7.3z" fill="#e8e4dc"/></g></svg><div class="t " style="left:374px;top:898px;font-size:10px;line-height:10px;font-weight:bold;color:#f3ede4;">-2</div><svg style="left:394.0px;top:877.0px;overflow:visible" width="30" height="30"><g transform="translate(15,15)"><circle cx="0" cy="0" r="9" fill="none" stroke="#2b353b" stroke-width="1.5"/><path d="M0.00 0.00L-6.72 -6.72" stroke="#f3ede4" stroke-width="2.2" stroke-linecap="butt"/><path d="M-11.8 -7.3L-7.3 -11.8L-7.3 -7.3z" fill="#56636b"/></g></svg><div class="t " style="left:414px;top:898px;font-size:10px;line-height:10px;font-weight:bold;color:#f3ede4;">0 st</div><svg style="left:441.0px;top:877.0px;overflow:visible" width="30" height="30"><g transform="translate(15,15)"><circle cx="0" cy="0" r="9" fill="none" stroke="#2b353b" stroke-width="1.5"/><path d="M0.00 0.00L-6.72 -6.72" stroke="#f3ede4" stroke-width="2.2" stroke-linecap="butt"/><path d="M-11.8 -7.3L-7.3 -11.8L-7.3 -7.3z" fill="#56636b"/></g></svg><div class="t " style="left:461px;top:898px;font-size:10px;line-height:10px;font-weight:bold;color:#f3ede4;">0.00</div><div style="left:497px;top:874px;width:24px;height:11px;background:#fdf3e6;"></div><div class="t " style="left:497px;top:875px;font-size:10px;line-height:10px;font-weight:normal;color:#333;width:24px;text-align:center">Fil1</div><div style="left:524px;top:873px;width:38px;height:13px;background:#2d363d;"></div><div class="t " style="left:527px;top:875px;font-size:10px;line-height:10px;font-weight:bold;color:#f3ede4;">LP12</div><div class="tri" style="left:552px;top:877px;border-width:4.5px 3.5px 0 3.5px;border-color:#f3ede4 transparent transparent transparent"></div><div class="t " style="left:495px;top:892px;font-size:10px;line-height:10px;font-weight:bold;color:#f3ede4;">To F2</div><div style="left:524px;top:889px;width:38px;height:13px;background:#2d363d;"></div><div class="t " style="left:524px;top:892px;font-size:10px;line-height:10px;font-weight:bold;color:#f3ede4;width:38px;text-align:center">0 %</div><div class="t " style="left:574px;top:871px;font-size:10px;line-height:10px;font-weight:bold;color:#f3ede4;">Freq</div><svg style="left:568.0px;top:877.0px;overflow:visible" width="30" height="30"><g transform="translate(15,15)"><circle cx="0" cy="0" r="9" fill="none" stroke="#2b353b" stroke-width="1.5"/><path d="M-1.25 8.91A9 9 0 1 1 4.50 -7.79" fill="none" stroke="#f3ede4" stroke-width="2"/><path d="M0.00 0.00L4.75 -8.23" stroke="#f3ede4" stroke-width="2.2" stroke-linecap="butt"/></g></svg><div class="t " style="left:587px;top:897px;font-size:10px;line-height:10px;font-weight:bold;color:#f3ede4;">4.6k</div><div class="t " style="left:619px;top:871px;font-size:10px;line-height:10px;font-weight:bold;color:#f3ede4;">Reso</div><svg style="left:613.0px;top:877.0px;overflow:visible" width="30" height="30"><g transform="translate(15,15)"><circle cx="0" cy="0" r="9" fill="none" stroke="#2b353b" stroke-width="1.5"/><path d="M-1.25 8.91A9 9 0 0 1 -8.69 -2.33" fill="none" stroke="#f3ede4" stroke-width="2"/><path d="M0.00 0.00L-9.18 -2.46" stroke="#f3ede4" stroke-width="2.2" stroke-linecap="butt"/></g></svg><div class="t " style="left:632px;top:897px;font-size:10px;line-height:10px;font-weight:bold;color:#f3ede4;">28 %</div><div style="left:671px;top:874px;width:30px;height:11px;background:#fdf3e6;"></div><div class="t " style="left:671px;top:875px;font-size:10px;line-height:10px;font-weight:normal;color:#333;width:30px;text-align:center">Amp1</div><div class="t " style="left:711px;top:871px;font-size:10px;line-height:10px;font-weight:bold;color:#f3ede4;">Pan</div><svg style="left:707.5px;top:879.0px;overflow:visible" width="30" height="30"><g transform="translate(15,15)"><circle cx="0" cy="0" r="9" fill="none" stroke="#2b353b" stroke-width="1.5"/><path d="M0.00 0.00L-6.72 -6.72" stroke="#f3ede4" stroke-width="2.2" stroke-linecap="butt"/><path d="M-11.8 -7.3L-7.3 -11.8L-7.3 -7.3z" fill="#56636b"/></g></svg><div class="t " style="left:728px;top:899px;font-size:10px;line-height:10px;font-weight:bold;color:#f3ede4;">C</div><div class="t " style="left:755px;top:871px;font-size:10px;line-height:10px;font-weight:bold;color:#f3ede4;">Level</div><svg style="left:749.0px;top:879.0px;overflow:visible" width="30" height="30"><g transform="translate(15,15)"><circle cx="0" cy="0" r="9" fill="none" stroke="#2b353b" stroke-width="1.5"/><path d="M-1.25 8.91A9 9 0 1 1 7.79 -4.50" fill="none" stroke="#f3ede4" stroke-width="2"/><path d="M0.00 0.00L8.23 -4.75" stroke="#f3ede4" stroke-width="2.2" stroke-linecap="butt"/></g></svg><div class="t " style="left:768px;top:898px;font-size:10px;line-height:10px;font-weight:bold;color:#f3ede4;">0.0 dB</div><div style="left:814px;top:874px;width:27px;height:11px;background:#fdf3e6;"></div><div class="t " style="left:814px;top:875px;font-size:10px;line-height:10px;font-weight:normal;color:#333;width:27px;text-align:center">LFO1</div><div style="left:845px;top:873px;width:16px;height:13px;background:#2d363d;"></div><div class="t " style="left:845px;top:875px;font-size:10px;line-height:10px;font-weight:normal;color:#f3ede4;width:16px;text-align:center">Hz</div><div style="left:846px;top:890px;width:15px;height:11px;background:#fdf3e6;"></div><svg style="left:848px;top:891px" width="11" height="10"><path d="M4 8V2h3v2" stroke="#333" stroke-width="1.2" fill="none"/><circle cx="3" cy="8" r="1.6" fill="#333"/></svg><div style="left:237px;top:1002px;width:28px;height:11px;background:#fdf3e6;"></div><div class="t " style="left:237px;top:1003px;font-size:10px;line-height:10px;font-weight:normal;color:#333;width:28px;text-align:center">Osc2</div><div style="left:270px;top:1001px;width:39px;height:13px;background:#2d363d;"></div><div style="left:270px;top:1002px;width:31px;height:11px;background:#4d5d69;"></div><div class="t " style="left:270px;top:1003px;font-size:10px;line-height:10px;font-weight:bold;color:#f3ede4;width:39px;text-align:center">0.0 dB</div><div class="t " style="left:237px;top:1020px;font-size:10px;line-height:10px;font-weight:bold;color:#f3ede4;">F1/F2</div><div style="left:269px;top:1017px;width:40px;height:13px;background:#2d363d;"></div><div class="t " style="left:283px;top:1020px;font-size:10px;line-height:10px;font-weight:bold;color:#f3ede4;">F2</div><div class="tri" style="left:298px;top:1019px;border-width:4.5px 6px 4.5px 0;border-color:transparent #f3ede4 transparent transparent"></div><div class="t " style="left:316px;top:999px;font-size:10px;line-height:10px;font-weight:bold;color:#f3ede4;">Shape</div><div style="left:317px;top:1010px;width:31px;height:13px;background:#2d363d;"></div><svg style="left:319px;top:1012px" width="18" height="9"><path d="M1 8V1l14 6" stroke="#f3ede4" stroke-width="1" fill="none"/></svg><div class="tri" style="left:338px;top:1014px;border-width:4px 3.5px 0 3.5px;border-color:#f3ede4 transparent transparent transparent"></div><div class="t " style="left:357px;top:999px;font-size:10px;line-height:10px;font-weight:bold;color:#f3ede4;">Octave</div><div class="t " style="left:398px;top:999px;font-size:10px;line-height:10px;font-weight:bold;color:#f3ede4;">Semi</div><div class="t " style="left:444px;top:999px;font-size:10px;line-height:10px;font-weight:bold;color:#f3ede4;">Detune</div><svg style="left:354.0px;top:1005.0px;overflow:visible" width="30" height="30"><g transform="translate(15,15)"><circle cx="0" cy="0" r="9" fill="none" stroke="#2b353b" stroke-width="1.5"/><path d="M0.00 0.00L-6.72 -6.72" stroke="#f3ede4" stroke-width="2.2" stroke-linecap="butt"/><path d="M-11.8 -7.3L-7.3 -11.8L-7.3 -7.3z" fill="#56636b"/></g></svg><div class="t " style="left:374px;top:1026px;font-size:10px;line-height:10px;font-weight:bold;color:#f3ede4;">0</div><svg style="left:394.0px;top:1005.0px;overflow:visible" width="30" height="30"><g transform="translate(15,15)"><circle cx="0" cy="0" r="9" fill="none" stroke="#2b353b" stroke-width="1.5"/><path d="M0.00 0.00L-6.72 -6.72" stroke="#f3ede4" stroke-width="2.2" stroke-linecap="butt"/><path d="M-11.8 -7.3L-7.3 -11.8L-7.3 -7.3z" fill="#56636b"/></g></svg><div class="t " style="left:414px;top:1026px;font-size:10px;line-height:10px;font-weight:bold;color:#f3ede4;">0 st</div><svg style="left:441.0px;top:1005.0px;overflow:visible" width="30" height="30"><g transform="translate(15,15)"><circle cx="0" cy="0" r="9" fill="none" stroke="#2b353b" stroke-width="1.5"/><path d="M0.00 0.00L-6.72 -6.72" stroke="#f3ede4" stroke-width="2.2" stroke-linecap="butt"/><path d="M-11.8 -7.3L-7.3 -11.8L-7.3 -7.3z" fill="#56636b"/></g></svg><div class="t " style="left:461px;top:1026px;font-size:10px;line-height:10px;font-weight:bold;color:#f3ede4;">0.00</div><div style="left:497px;top:1002px;width:24px;height:11px;background:#fdf3e6;"></div><div class="t " style="left:497px;top:1003px;font-size:10px;line-height:10px;font-weight:normal;color:#333;width:24px;text-align:center">Fil2</div><div style="left:524px;top:1001px;width:38px;height:13px;background:#2d363d;"></div><div class="t " style="left:527px;top:1003px;font-size:10px;line-height:10px;font-weight:bold;color:#f3ede4;">LP12</div><div class="tri" style="left:552px;top:1005px;border-width:4.5px 3.5px 0 3.5px;border-color:#f3ede4 transparent transparent transparent"></div><div style="left:524px;top:1017px;width:38px;height:13px;background:#2d363d;"></div><div class="t " style="left:524px;top:1020px;font-size:10px;line-height:10px;font-weight:bold;color:#f3ede4;width:38px;text-align:center">Follow</div><div class="t " style="left:574px;top:999px;font-size:10px;line-height:10px;font-weight:bold;color:#f3ede4;">Freq</div><svg style="left:568.0px;top:1005.0px;overflow:visible" width="30" height="30"><g transform="translate(15,15)"><circle cx="0" cy="0" r="9" fill="none" stroke="#2b353b" stroke-width="1.5"/><path d="M-1.25 8.91A9 9 0 0 1 -3.80 -8.16" fill="none" stroke="#f3ede4" stroke-width="2"/><path d="M0.00 0.00L-4.01 -8.61" stroke="#f3ede4" stroke-width="2.2" stroke-linecap="butt"/></g></svg><div class="t " style="left:587px;top:1025px;font-size:10px;line-height:10px;font-weight:bold;color:#f3ede4;">1.6k</div><div class="t " style="left:619px;top:999px;font-size:10px;line-height:10px;font-weight:bold;color:#f3ede4;">Reso</div><svg style="left:613.0px;top:1005.0px;overflow:visible" width="30" height="30"><g transform="translate(15,15)"><circle cx="0" cy="0" r="9" fill="none" stroke="#2b353b" stroke-width="1.5"/><path d="M-1.25 8.91A9 9 0 0 1 -8.97 0.78" fill="none" stroke="#f3ede4" stroke-width="2"/><path d="M0.00 0.00L-9.46 0.83" stroke="#f3ede4" stroke-width="2.2" stroke-linecap="butt"/></g></svg><div class="t " style="left:632px;top:1025px;font-size:10px;line-height:10px;font-weight:bold;color:#f3ede4;">20 %</div><div style="left:671px;top:1002px;width:30px;height:11px;background:#fdf3e6;"></div><div class="t " style="left:671px;top:1003px;font-size:10px;line-height:10px;font-weight:normal;color:#333;width:30px;text-align:center">Amp2</div><div class="t " style="left:711px;top:999px;font-size:10px;line-height:10px;font-weight:bold;color:#f3ede4;">Pan</div><svg style="left:707.5px;top:1007.0px;overflow:visible" width="30" height="30"><g transform="translate(15,15)"><circle cx="0" cy="0" r="9" fill="none" stroke="#2b353b" stroke-width="1.5"/><path d="M0.00 0.00L-6.72 -6.72" stroke="#f3ede4" stroke-width="2.2" stroke-linecap="butt"/><path d="M-11.8 -7.3L-7.3 -11.8L-7.3 -7.3z" fill="#56636b"/></g></svg><div class="t " style="left:728px;top:1027px;font-size:10px;line-height:10px;font-weight:bold;color:#f3ede4;">C</div><div class="t " style="left:755px;top:999px;font-size:10px;line-height:10px;font-weight:bold;color:#f3ede4;">Level</div><svg style="left:749.0px;top:1007.0px;overflow:visible" width="30" height="30"><g transform="translate(15,15)"><circle cx="0" cy="0" r="9" fill="none" stroke="#2b353b" stroke-width="1.5"/><path d="M-1.25 8.91A9 9 0 1 1 7.79 -4.50" fill="none" stroke="#f3ede4" stroke-width="2"/><path d="M0.00 0.00L8.23 -4.75" stroke="#f3ede4" stroke-width="2.2" stroke-linecap="butt"/></g></svg><div class="t " style="left:768px;top:1026px;font-size:10px;line-height:10px;font-weight:bold;color:#f3ede4;">0.0 dB</div><div style="left:814px;top:1002px;width:27px;height:11px;background:#fdf3e6;"></div><div class="t " style="left:814px;top:1003px;font-size:10px;line-height:10px;font-weight:normal;color:#333;width:27px;text-align:center">LFO2</div><div style="left:845px;top:1001px;width:16px;height:13px;background:#2d363d;"></div><div class="t " style="left:845px;top:1003px;font-size:10px;line-height:10px;font-weight:normal;color:#f3ede4;width:16px;text-align:center">Hz</div><div style="left:846px;top:1018px;width:15px;height:11px;background:#fdf3e6;"></div><svg style="left:848px;top:1019px" width="11" height="10"><path d="M4 8V2h3v2" stroke="#333" stroke-width="1.2" fill="none"/><circle cx="3" cy="8" r="1.6" fill="#333"/></svg><div class="t " style="left:886px;top:871px;font-size:10px;line-height:10px;font-weight:bold;color:#f3ede4;">Volume</div><svg style="left:880.0px;top:878.0px;overflow:visible" width="30" height="30"><g transform="translate(15,15)"><circle cx="0" cy="0" r="9" fill="none" stroke="#2b353b" stroke-width="1.5"/><path d="M-1.25 8.91A9 9 0 0 1 -2.33 -8.69" fill="none" stroke="#f3ede4" stroke-width="2"/><path d="M0.00 0.00L-2.46 -9.18" stroke="#f3ede4" stroke-width="2.2" stroke-linecap="butt"/></g></svg><div class="t " style="left:899px;top:896px;font-size:10px;line-height:10px;font-weight:bold;color:#f3ede4;">-3.1 dB</div><div class="t " style="left:819px;top:915px;font-size:10px;line-height:10px;font-weight:bold;color:#f3ede4;">Rate</div><svg style="left:812.5px;top:921.0px;overflow:visible" width="30" height="30"><g transform="translate(15,15)"><circle cx="0" cy="0" r="9" fill="none" stroke="#2b353b" stroke-width="1.5"/><path d="M-1.25 8.91A9 9 0 0 1 -7.79 -4.50" fill="none" stroke="#f3ede4" stroke-width="2"/><path d="M0.00 0.00L-8.23 -4.75" stroke="#f3ede4" stroke-width="2.2" stroke-linecap="butt"/></g></svg><div class="t " style="left:832px;top:938px;font-size:10px;line-height:10px;font-weight:bold;color:#f3ede4;">1/2</div><div class="t " style="left:819px;top:958px;font-size:10px;line-height:10px;font-weight:bold;color:#f3ede4;">Rate</div><svg style="left:812.5px;top:964.0px;overflow:visible" width="30" height="30"><g transform="translate(15,15)"><circle cx="0" cy="0" r="9" fill="none" stroke="#2b353b" stroke-width="1.5"/><path d="M-1.25 8.91A9 9 0 0 1 -5.79 -6.89" fill="none" stroke="#f3ede4" stroke-width="2"/><path d="M0.00 0.00L-6.11 -7.28" stroke="#f3ede4" stroke-width="2.2" stroke-linecap="butt"/></g></svg><div class="t " style="left:832px;top:981px;font-size:10px;line-height:10px;font-weight:bold;color:#f3ede4;">1/4</div><div style="left:873px;top:916px;width:21px;height:12px;background:#2d363d;"></div><div class="t " style="left:873px;top:918px;font-size:10px;line-height:10px;font-weight:bold;color:#f3ede4;width:21px;text-align:center">Vib</div><div style="left:897px;top:916px;width:39px;height:12px;background:#2d363d;"></div><div class="t " style="left:897px;top:918px;font-size:10px;line-height:10px;font-weight:bold;color:#f3ede4;width:39px;text-align:center">0 %</div><div class="t " style="left:874px;top:934px;font-size:10px;line-height:10px;font-weight:bold;color:#f3ede4;">Rate</div><div style="left:897px;top:931px;width:39px;height:12px;background:#2d363d;"></div><div class="t " style="left:897px;top:933px;font-size:10px;line-height:10px;font-weight:bold;color:#f3ede4;width:39px;text-align:center">5.1 Hz</div><div style="left:873px;top:966px;width:21px;height:12px;background:#2d363d;"></div><div class="t " style="left:873px;top:968px;font-size:10px;line-height:10px;font-weight:bold;color:#f3ede4;width:21px;text-align:center">Uni</div><div style="left:897px;top:966px;width:39px;height:12px;background:#2d363d;"></div><div class="t " style="left:897px;top:968px;font-size:10px;line-height:10px;font-weight:bold;color:#f3ede4;width:39px;text-align:center">0.00</div><div style="left:873px;top:1001px;width:21px;height:12px;background:#2d363d;"></div><div class="t " style="left:873px;top:1003px;font-size:10px;line-height:10px;font-weight:bold;color:#f3ede4;width:21px;text-align:center">Gli</div><div style="left:897px;top:1001px;width:39px;height:12px;background:#2d363d;"></div><div class="t " style="left:897px;top:1003px;font-size:10px;line-height:10px;font-weight:bold;color:#f3ede4;width:39px;text-align:center">50 %</div><div class="t " style="left:897px;top:956px;font-size:10px;line-height:10px;font-weight:bold;color:#f3ede4;">Detune</div><div class="t " style="left:897px;top:991px;font-size:10px;line-height:10px;font-weight:bold;color:#f3ede4;">Time</div><div style="left:897px;top:1018px;width:39px;height:12px;background:#2d363d;"></div><div class="t " style="left:897px;top:1020px;font-size:10px;line-height:10px;font-weight:normal;color:#f3ede4;width:39px;text-align:center">Legato</div><div class="t " style="left:877px;top:856px;font-size:9px;line-height:9px;font-weight:bold;color:#46525a;">A|A|S</div><svg style="left:910px;top:853px" width="28" height="12"><path d="M3 7l3-3h3M8 2l2 2-2 2M9 5L6 8H3M4 10L2 8l2-2" stroke="#f3ede4" stroke-width="1" fill="none"/><path d="M18.5 2.5h6l1.5 1.5v6h-7.5z" fill="#f3ede4"/><rect x="20" y="3" width="3" height="2" fill="#333"/></svg><div style="left:318px;top:910px;width:488px;height:83px;background:#2e383f;border-radius:4px"></div><div class="t " style="left:322px;top:930px;font-size:10px;line-height:10px;font-weight:bold;color:#c9cdcd;">Quick Routing</div><div style="left:393px;top:936px;width:31px;height:1px;background:#8d9599;"></div><div class="t " style="left:431px;top:930px;font-size:10px;line-height:10px;font-weight:bold;color:#c9cdcd;">Vibrato</div><div style="left:470px;top:936px;width:51px;height:1px;background:#8d9599;"></div><div class="t " style="left:525px;top:930px;font-size:10px;line-height:10px;font-weight:bold;color:#c9cdcd;">Keyboard</div><div style="left:574px;top:936px;width:133px;height:1px;background:#8d9599;"></div><div class="t " style="left:713px;top:930px;font-size:10px;line-height:10px;font-weight:bold;color:#c9cdcd;">Unison</div><div style="left:749px;top:936px;width:5px;height:1px;background:#8d9599;"></div><div class="t " style="left:760px;top:930px;font-size:10px;line-height:10px;font-weight:bold;color:#c9cdcd;">Glide</div><div style="left:788px;top:936px;width:13px;height:1px;background:#8d9599;"></div><div class="t " style="left:431px;top:941px;font-size:10px;line-height:10px;font-weight:bold;color:#c9cdcd;">Delay</div><div class="t " style="left:433px;top:954px;font-size:10px;line-height:10px;font-weight:bold;color:#c9cdcd;">0 ms</div><div class="t " style="left:431px;top:967px;font-size:10px;line-height:10px;font-weight:bold;color:#c9cdcd;">Error</div><div class="t " style="left:433px;top:980px;font-size:10px;line-height:10px;font-weight:bold;color:#c9cdcd;">0 %</div><div class="t " style="left:478px;top:941px;font-size:10px;line-height:10px;font-weight:bold;color:#c9cdcd;">Attack</div><div class="t " style="left:480px;top:954px;font-size:10px;line-height:10px;font-weight:bold;color:#c9cdcd;">0 ms</div><div class="t " style="left:478px;top:967px;font-size:10px;line-height:10px;font-weight:bold;color:#c9cdcd;">Amt&lt;MW</div><div class="t " style="left:480px;top:980px;font-size:10px;line-height:10px;font-weight:bold;color:#c9cdcd;">0 %</div><div class="t " style="left:525px;top:941px;font-size:10px;line-height:10px;font-weight:bold;color:#c9cdcd;">Octave</div><div class="t " style="left:527px;top:954px;font-size:10px;line-height:10px;font-weight:bold;color:#e9e5de;">2</div><div class="t " style="left:525px;top:967px;font-size:10px;line-height:10px;font-weight:bold;color:#c9cdcd;">PB Range</div><div class="t " style="left:527px;top:980px;font-size:10px;line-height:10px;font-weight:bold;color:#e9e5de;">6.00</div><div class="t " style="left:572px;top:941px;font-size:10px;line-height:10px;font-weight:bold;color:#c9cdcd;">Semi</div><div class="t " style="left:574px;top:954px;font-size:10px;line-height:10px;font-weight:bold;color:#e9e5de;">0 st</div><div class="t " style="left:572px;top:967px;font-size:10px;line-height:10px;font-weight:bold;color:#c9cdcd;">Stretch</div><div class="t " style="left:574px;top:980px;font-size:10px;line-height:10px;font-weight:bold;color:#e9e5de;">0 %</div><div class="t " style="left:620px;top:941px;font-size:10px;line-height:10px;font-weight:bold;color:#c9cdcd;">Detune</div><div class="t " style="left:622px;top:954px;font-size:10px;line-height:10px;font-weight:bold;color:#e9e5de;">0.00</div><div class="t " style="left:620px;top:967px;font-size:10px;line-height:10px;font-weight:bold;color:#c9cdcd;">Error</div><div class="t " style="left:622px;top:980px;font-size:10px;line-height:10px;font-weight:bold;color:#e9e5de;">35 %</div><div class="t " style="left:666px;top:941px;font-size:10px;line-height:10px;font-weight:bold;color:#c9cdcd;">Voices</div><div class="t " style="left:668px;top:954px;font-size:10px;line-height:10px;font-weight:bold;color:#e9e5de;">Mono</div><div class="t " style="left:666px;top:967px;font-size:10px;line-height:10px;font-weight:bold;color:#c9cdcd;">Priority</div><div class="t " style="left:668px;top:980px;font-size:10px;line-height:10px;font-weight:bold;color:#e9e5de;">High</div><div class="t " style="left:713px;top:941px;font-size:10px;line-height:10px;font-weight:bold;color:#c9cdcd;">Voices</div><div class="t " style="left:715px;top:954px;font-size:10px;line-height:10px;font-weight:bold;color:#c9cdcd;">2</div><div class="t " style="left:713px;top:967px;font-size:10px;line-height:10px;font-weight:bold;color:#c9cdcd;">Delay</div><div class="t " style="left:715px;top:980px;font-size:10px;line-height:10px;font-weight:bold;color:#c9cdcd;">0 ms</div><div class="t " style="left:760px;top:941px;font-size:10px;line-height:10px;font-weight:bold;color:#c9cdcd;">Mode</div><div class="t " style="left:762px;top:954px;font-size:10px;line-height:10px;font-weight:bold;color:#c9cdcd;">Prop</div><div class="tri" style="left:703px;top:957px;border-width:4px 3.5px 0 3.5px;border-color:#f3ede4 transparent transparent transparent"></div><div class="tri" style="left:750px;top:957px;border-width:4px 3.5px 0 3.5px;border-color:#c9cdcd transparent transparent transparent"></div><div class="tri" style="left:797px;top:957px;border-width:4px 3.5px 0 3.5px;border-color:#c9cdcd transparent transparent transparent"></div><div class="tri" style="left:703px;top:984px;border-width:4px 3.5px 0 3.5px;border-color:#f3ede4 transparent transparent transparent"></div><svg style="left:322px;top:938px" width="100" height="54"><g fill="none" stroke-width="1.1"><rect x="3.5" y="3.5" width="8.5" height="8.5" stroke="#e8862a"/><rect x="17.5" y="3.5" width="8.5" height="8.5" stroke="#3ec83a"/><rect x="31.5" y="3.5" width="8.5" height="8.5" stroke="#40e0b0"/><path d="M12 7.5h5" stroke="#e8862a"/><path d="M26 7.5h5" stroke="#3ec83a"/><path d="M40 7.5h5" stroke="#40e0b0"/><rect x="3.5" y="15.5" width="8.5" height="8.5" stroke="#e8862a"/><rect x="17.5" y="15.5" width="8.5" height="8.5" stroke="#3ec83a"/><rect x="31.5" y="15.5" width="8.5" height="8.5" stroke="#40e0b0"/><path d="M12 19.5h5" stroke="#e8862a"/><path d="M26 19.5h5" stroke="#3ec83a"/><path d="M40 19.5h5" stroke="#40e0b0"/><rect x="3.5" y="29.5" width="8.5" height="8.5" stroke="#e8862a"/><rect x="17.5" y="29.5" width="8.5" height="8.5" stroke="#3ec83a"/><rect x="31.5" y="29.5" width="8.5" height="8.5" stroke="#40e0b0"/><path d="M12 33.5h5" stroke="#e8862a"/><path d="M26 33.5h5" stroke="#3ec83a"/><path d="M40 33.5h5" stroke="#40e0b0"/><rect x="3.5" y="41.5" width="8.5" height="8.5" stroke="#e8862a"/><rect x="17.5" y="41.5" width="8.5" height="8.5" stroke="#d8d8d8"/><rect x="31.5" y="41.5" width="8.5" height="8.5" stroke="#d8d8d8"/><path d="M12 45.5h2.5V33.5" stroke="#e8862a"/><rect x="58.5" y="3.5" width="8.5" height="8.5" stroke="#e8862a"/><rect x="72.5" y="3.5" width="8.5" height="8.5" stroke="#3ec83a"/><rect x="86.5" y="3.5" width="8.5" height="8.5" stroke="#40e0b0"/><path d="M67 7.5h5" stroke="#e8862a"/><path d="M81 7.5h5M95 7.5h4" stroke="#3ec83a"/><rect x="58.5" y="15.5" width="8.5" height="8.5" stroke="#e8862a"/><rect x="72.5" y="15.5" width="8.5" height="8.5" stroke="#3ec83a"/><rect x="86.5" y="15.5" width="8.5" height="8.5" stroke="#40e0b0"/><path d="M67 19.5h5" stroke="#e8862a"/><path d="M81 19.5h5M95 19.5h4" stroke="#3ec83a"/><rect x="58.5" y="29.5" width="8.5" height="8.5" stroke="#e8862a"/><rect x="72.5" y="29.5" width="8.5" height="8.5" stroke="#3ec83a"/><rect x="86.5" y="29.5" width="8.5" height="8.5" stroke="#d8d8d8"/><path d="M67 33.5h5" stroke="#e8862a"/><rect x="58.5" y="41.5" width="8.5" height="8.5" stroke="#e8862a"/><rect x="72.5" y="41.5" width="8.5" height="8.5" stroke="#3ec83a"/><rect x="86.5" y="41.5" width="8.5" height="8.5" stroke="#40e0b0"/><path d="M67 45.5h5" stroke="#e8862a"/><path d="M81 45.5h5M95 45.5h4" stroke="#3ec83a"/><path d="M69.5 7.5V19.5M69.5 33.5V45.5" stroke="#e8862a"/><path d="M76.5 38V41" stroke="#3ec83a"/></g></svg><div class="t " style="left:253px;top:955px;font-size:10px;line-height:10px;font-weight:bold;color:#f3ede4;">Color</div><svg style="left:248.0px;top:962.0px;overflow:visible" width="30" height="30"><g transform="translate(15,15)"><circle cx="0" cy="0" r="9" fill="none" stroke="#2b353b" stroke-width="1.5"/><path d="M-1.25 8.91A9 9 0 1 1 9.00 -0.00" fill="none" stroke="#f3ede4" stroke-width="2"/><path d="M0.00 0.00L9.50 -0.00" stroke="#f3ede4" stroke-width="2.2" stroke-linecap="butt"/></g></svg><div class="t " style="left:266px;top:980px;font-size:10px;line-height:10px;font-weight:bold;color:#f3ede4;">22.0 kHz</div><div style="left:237px;top:915px;width:28px;height:12px;background:#2d363d;"></div><div class="t " style="left:237px;top:917px;font-size:10px;line-height:10px;font-weight:bold;color:#f3ede4;width:28px;text-align:center">Noise</div><div style="left:270px;top:915px;width:39px;height:12px;background:#2d363d;"></div><div class="t " style="left:270px;top:917px;font-size:10px;line-height:10px;font-weight:bold;color:#f3ede4;width:39px;text-align:center">0.0 dB</div><div class="t " style="left:237px;top:934px;font-size:10px;line-height:10px;font-weight:bold;color:#f3ede4;">F1/F2</div><div style="left:269px;top:931px;width:40px;height:13px;background:#2d363d;"></div><div class="t " style="left:283px;top:934px;font-size:10px;line-height:10px;font-weight:bold;color:#f3ede4;">F1</div><div class="tri" style="left:298px;top:933px;border-width:4.5px 6px 4.5px 0;border-color:transparent #3c474f transparent transparent"></div><div style="left:955px;top:853px;width:11px;height:11px;background:#f3ede4;border-radius:50%"></div><div class="t " style="left:972px;top:855px;font-size:10px;line-height:10px;font-weight:bold;color:#f3ede4;">Berlin</div><svg style="left:1316px;top:853px" width="28" height="12"><circle cx="5" cy="6" r="5" fill="none"/><path d="M3 7l2-2.5h2.5M6.5 3l1.5 1.5-1.5 1.5M7.5 5.5L5 8H3" stroke="#f3ede4" stroke-width="1" fill="none"/><path d="M19 1.5h6l1.5 1.5v7.5h-7.5z" fill="#f3ede4"/><rect x="20.5" y="2.5" width="3.5" height="2.5" fill="#333"/></svg><div class="t " style="left:957px;top:873px;font-size:10px;line-height:10px;font-weight:bold;color:#f3ede4;">Filter</div><div style="left:970px;top:884px;width:25px;height:12px;background:#2d363d;"></div><div class="t " style="left:970px;top:886px;font-size:10px;line-height:10px;font-weight:bold;color:#f3ede4;width:25px;text-align:center">On</div><div class="t " style="left:957px;top:911px;font-size:10px;line-height:10px;font-weight:bold;color:#f3ede4;">Frequency</div><svg style="left:964.5px;top:916.0px;overflow:visible" width="36" height="36"><g transform="translate(18,18)"><circle cx="0" cy="0" r="12" fill="none" stroke="#2b353b" stroke-width="1.8"/><path d="M-1.50 2.60L-6.25 10.83" stroke="#f3ede4" stroke-width="2.2" stroke-linecap="butt"/></g></svg><div class="t " style="left:964px;top:947px;font-size:10px;line-height:10px;font-weight:bold;color:#f3ede4;width:36px;text-align:center">50.0 Hz</div><div style="left:970px;top:971px;width:24px;height:12px;background:#2d363d;"></div><svg style="left:970px;top:971px" width="24" height="12"><path d="M6 4h8a2 2 0 0 1 2 2v3" stroke="#f3ede4" stroke-width="1.2" fill="none"/></svg><div style="left:970px;top:987px;width:24px;height:12px;background:#2d363d;"></div><svg style="left:970px;top:987px" width="24" height="12"><path d="M6 9V6a2 2 0 0 1 2-2h8" stroke="#f3ede4" stroke-width="1.2" fill="none"/></svg><div style="left:970px;top:1003px;width:24px;height:12px;background:#2d363d;"></div><svg style="left:970px;top:1003px" width="24" height="12"><path d="M6 9V6a2 2 0 0 1 2-2h4a2 2 0 0 1 2 2v3" stroke="#f3ede4" stroke-width="1.2" fill="none"/></svg><div style="left:970px;top:1019px;width:24px;height:12px;background:#2d363d;"></div><svg style="left:970px;top:1019px" width="24" height="12"><path d="M4 3l3 5h8l3-5" stroke="#f3ede4" stroke-width="1.2" fill="none"/></svg><div style="left:1011px;top:873px;width:1px;height:160px;background:#2b343b;"></div><div class="t " style="left:1015px;top:873px;font-size:10px;line-height:10px;font-weight:bold;color:#f3ede4;">Mode</div><div style="left:1024px;top:885px;width:22px;height:11px;background:#fdf3e6;"></div><div class="t " style="left:1024px;top:886px;font-size:10px;line-height:10px;font-weight:normal;color:#333;width:22px;text-align:center">A</div><div class="t " style="left:1020px;top:906px;font-size:10px;line-height:10px;font-weight:bold;color:#f3ede4;">Decay</div><svg style="left:1016.3px;top:910.5px;overflow:visible" width="38" height="38"><g transform="translate(19,19)"><circle cx="0" cy="0" r="13" fill="none" stroke="#2b353b" stroke-width="1.8"/><path d="M-9.19 9.19A13 13 0 1 1 12.95 1.13" fill="none" stroke="#f3ede4" stroke-width="2.2"/><path d="M0.00 0.00L13.45 1.18" stroke="#f3ede4" stroke-width="2.4000000000000004" stroke-linecap="butt"/></g></svg><div class="t " style="left:1022px;top:943px;font-size:10px;line-height:10px;font-weight:bold;color:#f3ede4;width:27px;text-align:center">77.0</div><div style="left:1019px;top:962px;width:31px;height:12px;background:#2d363d;"></div><div class="t " style="left:1019px;top:963px;font-size:10px;line-height:10px;font-weight:bold;color:#f3ede4;width:31px;text-align:center">Const</div><div class="t " style="left:1022px;top:984px;font-size:10px;line-height:10px;font-weight:bold;color:#f3ede4;">Color</div><svg style="left:1016.3px;top:989.0px;overflow:visible" width="38" height="38"><g transform="translate(19,19)"><circle cx="0" cy="0" r="13" fill="none" stroke="#2b353b" stroke-width="1.8"/><path d="M-9.19 9.19A13 13 0 1 1 12.56 3.36" fill="none" stroke="#f3ede4" stroke-width="2.2"/><path d="M0.00 0.00L13.04 3.49" stroke="#f3ede4" stroke-width="2.4000000000000004" stroke-linecap="butt"/></g></svg><div class="t " style="left:1022px;top:1021px;font-size:10px;line-height:10px;font-weight:bold;color:#f3ede4;width:27px;text-align:center">85.7</div><div class="t " style="left:1062px;top:873px;font-size:10px;line-height:10px;font-weight:bold;color:#f3ede4;">I</div><div style="left:1070.4px;top:885px;width:24px;height:11px;background:#fdf3e6;"></div><div class="t " style="left:1070.4px;top:886px;font-size:10px;line-height:10px;font-weight:normal;color:#333;width:24px;text-align:center">On</div><div class="t " style="left:1062.4px;top:901px;font-size:10px;line-height:10px;font-weight:bold;color:#f3ede4;width:40px;text-align:center">Note</div><div class="tri" style="left:1078.4px;top:913px;border-width:4px 4px 0 4px;border-color:#f3ede4 transparent transparent transparent"></div><svg style="left:1064.4px;top:913.5px;overflow:visible" width="36" height="36"><g transform="translate(18,18)"><circle cx="0" cy="0" r="12" fill="none" stroke="#2b353b" stroke-width="1.8"/><path d="M-4.10 -11.28A12 12 0 0 1 0.00 -12.00" fill="none" stroke="#f3ede4" stroke-width="2.2"/><path d="M0.00 0.00L-4.28 -11.75" stroke="#f3ede4" stroke-width="2.4000000000000004" stroke-linecap="butt"/></g></svg><div class="t " style="left:1062.4px;top:944px;font-size:10px;line-height:10px;font-weight:bold;color:#f3ede4;width:40px;text-align:center">G1</div><div style="left:1069.4px;top:962px;width:26px;height:12px;background:#2d363d;"></div><div class="t " style="left:1069.4px;top:963px;font-size:10px;line-height:10px;font-weight:bold;color:#f3ede4;width:26px;text-align:center">0</div><div class="t " style="left:1062.4px;top:984px;font-size:10px;line-height:10px;font-weight:bold;color:#f3ede4;width:40px;text-align:center">Gain</div><svg style="left:1064.4px;top:990.5px;overflow:visible" width="36" height="36"><g transform="translate(18,18)"><circle cx="0" cy="0" r="12" fill="none" stroke="#2b353b" stroke-width="1.8"/><path d="M-8.49 8.49A12 12 0 1 1 11.82 2.08" fill="none" stroke="#f3ede4" stroke-width="2.2"/><path d="M0.00 0.00L12.31 2.17" stroke="#f3ede4" stroke-width="2.4000000000000004" stroke-linecap="butt"/></g></svg><div class="t " style="left:1062.4px;top:1022px;font-size:10px;line-height:10px;font-weight:bold;color:#f3ede4;width:40px;text-align:center">0.00 dB</div><div class="t " style="left:1110px;top:873px;font-size:10px;line-height:10px;font-weight:bold;color:#f3ede4;">II</div><div style="left:1118.4px;top:885px;width:24px;height:11px;background:#fdf3e6;"></div><div class="t " style="left:1118.4px;top:886px;font-size:10px;line-height:10px;font-weight:normal;color:#333;width:24px;text-align:center">On</div><div class="t " style="left:1110.4px;top:901px;font-size:10px;line-height:10px;font-weight:bold;color:#f3ede4;width:40px;text-align:center">Pitch</div><div class="tri" style="left:1126.4px;top:913px;border-width:4px 4px 0 4px;border-color:#f3ede4 transparent transparent transparent"></div><svg style="left:1112.4px;top:913.5px;overflow:visible" width="36" height="36"><g transform="translate(18,18)"><circle cx="0" cy="0" r="12" fill="none" stroke="#2b353b" stroke-width="1.8"/><path d="M0.00 -12.00A12 12 0 0 1 10.39 -6.00" fill="none" stroke="#f3ede4" stroke-width="2.2"/><path d="M0.00 0.00L10.83 -6.25" stroke="#f3ede4" stroke-width="2.4000000000000004" stroke-linecap="butt"/></g></svg><div class="t " style="left:1110.4px;top:944px;font-size:10px;line-height:10px;font-weight:bold;color:#f3ede4;width:40px;text-align:center">+7 st</div><div style="left:1117.4px;top:962px;width:26px;height:12px;background:#2d363d;"></div><div class="t " style="left:1117.4px;top:963px;font-size:10px;line-height:10px;font-weight:bold;color:#f3ede4;width:18px;text-align:right">-3</div><div class="tri" style="left:1135.4px;top:963px;border-width:4.5px 6px 4.5px 0;border-color:transparent #f3ede4 transparent transparent"></div><div class="t " style="left:1110.4px;top:984px;font-size:10px;line-height:10px;font-weight:bold;color:#f3ede4;width:40px;text-align:center">Gain</div><svg style="left:1112.4px;top:990.5px;overflow:visible" width="36" height="36"><g transform="translate(18,18)"><circle cx="0" cy="0" r="12" fill="none" stroke="#2b353b" stroke-width="1.8"/><path d="M-8.49 8.49A12 12 0 1 1 11.82 2.08" fill="none" stroke="#f3ede4" stroke-width="2.2"/><path d="M0.00 0.00L12.31 2.17" stroke="#f3ede4" stroke-width="2.4000000000000004" stroke-linecap="butt"/></g></svg><div class="t " style="left:1110.4px;top:1022px;font-size:10px;line-height:10px;font-weight:bold;color:#f3ede4;width:40px;text-align:center">0.00 dB</div><div class="t " style="left:1158px;top:873px;font-size:10px;line-height:10px;font-weight:bold;color:#f3ede4;">III</div><div style="left:1166.4px;top:885px;width:24px;height:11px;background:#fdf3e6;"></div><div class="t " style="left:1166.4px;top:886px;font-size:10px;line-height:10px;font-weight:normal;color:#333;width:24px;text-align:center">On</div><div class="t " style="left:1158.4px;top:901px;font-size:10px;line-height:10px;font-weight:bold;color:#f3ede4;width:40px;text-align:center">Pitch</div><div class="tri" style="left:1174.4px;top:913px;border-width:4px 4px 0 4px;border-color:#f3ede4 transparent transparent transparent"></div><svg style="left:1160.4px;top:913.5px;overflow:visible" width="36" height="36"><g transform="translate(18,18)"><circle cx="0" cy="0" r="12" fill="none" stroke="#2b353b" stroke-width="1.8"/><path d="M0.00 -12.00A12 12 0 0 1 10.39 -6.00" fill="none" stroke="#f3ede4" stroke-width="2.2"/><path d="M0.00 0.00L10.83 -6.25" stroke="#f3ede4" stroke-width="2.4000000000000004" stroke-linecap="butt"/></g></svg><div class="t " style="left:1158.4px;top:944px;font-size:10px;line-height:10px;font-weight:bold;color:#f3ede4;width:40px;text-align:center">+7 st</div><div style="left:1165.4px;top:962px;width:26px;height:12px;background:#2d363d;"></div><div class="t " style="left:1165.4px;top:963px;font-size:10px;line-height:10px;font-weight:bold;color:#f3ede4;width:18px;text-align:right">7</div><div class="tri" style="left:1183.4px;top:963px;border-width:4.5px 6px 4.5px 0;border-color:transparent #f3ede4 transparent transparent"></div><div class="t " style="left:1158.4px;top:984px;font-size:10px;line-height:10px;font-weight:bold;color:#f3ede4;width:40px;text-align:center">Gain</div><svg style="left:1160.4px;top:990.5px;overflow:visible" width="36" height="36"><g transform="translate(18,18)"><circle cx="0" cy="0" r="12" fill="none" stroke="#2b353b" stroke-width="1.8"/><path d="M-8.49 8.49A12 12 0 1 1 11.82 2.08" fill="none" stroke="#f3ede4" stroke-width="2.2"/><path d="M0.00 0.00L12.31 2.17" stroke="#f3ede4" stroke-width="2.4000000000000004" stroke-linecap="butt"/></g></svg><div class="t " style="left:1158.4px;top:1022px;font-size:10px;line-height:10px;font-weight:bold;color:#f3ede4;width:40px;text-align:center">0.00 dB</div><div class="t " style="left:1206px;top:873px;font-size:10px;line-height:10px;font-weight:bold;color:#f3ede4;">IV</div><div style="left:1214.4px;top:885px;width:24px;height:11px;background:#fdf3e6;"></div><div class="t " style="left:1214.4px;top:886px;font-size:10px;line-height:10px;font-weight:normal;color:#333;width:24px;text-align:center">On</div><div class="t " style="left:1206.4px;top:901px;font-size:10px;line-height:10px;font-weight:bold;color:#f3ede4;width:40px;text-align:center">Pitch</div><div class="tri" style="left:1222.4px;top:913px;border-width:4px 4px 0 4px;border-color:#f3ede4 transparent transparent transparent"></div><svg style="left:1208.4px;top:913.5px;overflow:visible" width="36" height="36"><g transform="translate(18,18)"><circle cx="0" cy="0" r="12" fill="none" stroke="#2b353b" stroke-width="1.8"/><path d="M0.00 -12.00A12 12 0 0 1 4.10 -11.28" fill="none" stroke="#f3ede4" stroke-width="2.2"/><path d="M0.00 0.00L4.28 -11.75" stroke="#f3ede4" stroke-width="2.4000000000000004" stroke-linecap="butt"/></g></svg><div class="t " style="left:1206.4px;top:944px;font-size:10px;line-height:10px;font-weight:bold;color:#f3ede4;width:40px;text-align:center">+3 st</div><div style="left:1213.4px;top:962px;width:26px;height:12px;background:#2d363d;"></div><div class="t " style="left:1213.4px;top:963px;font-size:10px;line-height:10px;font-weight:bold;color:#f3ede4;width:18px;text-align:right">-8</div><div class="tri" style="left:1231.4px;top:963px;border-width:4.5px 6px 4.5px 0;border-color:transparent #f3ede4 transparent transparent"></div><div class="t " style="left:1206.4px;top:984px;font-size:10px;line-height:10px;font-weight:bold;color:#f3ede4;width:40px;text-align:center">Gain</div><svg style="left:1208.4px;top:990.5px;overflow:visible" width="36" height="36"><g transform="translate(18,18)"><circle cx="0" cy="0" r="12" fill="none" stroke="#2b353b" stroke-width="1.8"/><path d="M-8.49 8.49A12 12 0 1 1 11.82 2.08" fill="none" stroke="#f3ede4" stroke-width="2.2"/><path d="M0.00 0.00L12.31 2.17" stroke="#f3ede4" stroke-width="2.4000000000000004" stroke-linecap="butt"/></g></svg><div class="t " style="left:1206.4px;top:1022px;font-size:10px;line-height:10px;font-weight:bold;color:#f3ede4;width:40px;text-align:center">0.00 dB</div><div class="t " style="left:1254px;top:873px;font-size:10px;line-height:10px;font-weight:bold;color:#f3ede4;">V</div><div style="left:1262.4px;top:885px;width:24px;height:11px;background:#fdf3e6;"></div><div class="t " style="left:1262.4px;top:886px;font-size:10px;line-height:10px;font-weight:normal;color:#333;width:24px;text-align:center">On</div><div class="t " style="left:1254.4px;top:901px;font-size:10px;line-height:10px;font-weight:bold;color:#f3ede4;width:40px;text-align:center">Pitch</div><div class="tri" style="left:1270.4px;top:913px;border-width:4px 4px 0 4px;border-color:#f3ede4 transparent transparent transparent"></div><svg style="left:1256.4px;top:913.5px;overflow:visible" width="36" height="36"><g transform="translate(18,18)"><circle cx="0" cy="0" r="12" fill="none" stroke="#2b353b" stroke-width="1.8"/><path d="M0.00 -12.00A12 12 0 0 1 4.10 -11.28" fill="none" stroke="#f3ede4" stroke-width="2.2"/><path d="M0.00 0.00L4.28 -11.75" stroke="#f3ede4" stroke-width="2.4000000000000004" stroke-linecap="butt"/></g></svg><div class="t " style="left:1254.4px;top:944px;font-size:10px;line-height:10px;font-weight:bold;color:#f3ede4;width:40px;text-align:center">+3 st</div><div style="left:1261.4px;top:962px;width:26px;height:12px;background:#2d363d;"></div><div class="t " style="left:1261.4px;top:963px;font-size:10px;line-height:10px;font-weight:bold;color:#f3ede4;width:18px;text-align:right">12</div><div class="tri" style="left:1279.4px;top:963px;border-width:4.5px 6px 4.5px 0;border-color:transparent #f3ede4 transparent transparent"></div><div class="t " style="left:1254.4px;top:984px;font-size:10px;line-height:10px;font-weight:bold;color:#f3ede4;width:40px;text-align:center">Gain</div><svg style="left:1256.4px;top:990.5px;overflow:visible" width="36" height="36"><g transform="translate(18,18)"><circle cx="0" cy="0" r="12" fill="none" stroke="#2b353b" stroke-width="1.8"/><path d="M-8.49 8.49A12 12 0 1 1 11.82 2.08" fill="none" stroke="#f3ede4" stroke-width="2.2"/><path d="M0.00 0.00L12.31 2.17" stroke="#f3ede4" stroke-width="2.4000000000000004" stroke-linecap="butt"/></g></svg><div class="t " style="left:1254.4px;top:1022px;font-size:10px;line-height:10px;font-weight:bold;color:#f3ede4;width:40px;text-align:center">0.00 dB</div><div class="t " style="left:1300px;top:873px;font-size:10px;line-height:10px;font-weight:bold;color:#f3ede4;width:40px;text-align:center">Width</div><svg style="left:1302.0px;top:878.5px;overflow:visible" width="36" height="36"><g transform="translate(18,18)"><circle cx="0" cy="0" r="12" fill="none" stroke="#2b353b" stroke-width="1.8"/><path d="M-8.49 8.49A12 12 0 1 1 6.00 10.39" fill="none" stroke="#f3ede4" stroke-width="2.2"/><path d="M0.00 0.00L6.25 10.83" stroke="#f3ede4" stroke-width="2.4000000000000004" stroke-linecap="butt"/></g></svg><div class="t " style="left:1300px;top:909px;font-size:10px;line-height:10px;font-weight:bold;color:#f3ede4;width:40px;text-align:center">100 %</div><div class="t " style="left:1300px;top:926px;font-size:10px;line-height:10px;font-weight:bold;color:#f3ede4;width:40px;text-align:center">Gain</div><div class="tri" style="left:1316px;top:937px;border-width:4px 4px 0 4px;border-color:#f3ede4 transparent transparent transparent"></div><svg style="left:1302.0px;top:937.0px;overflow:visible" width="36" height="36"><g transform="translate(18,18)"><circle cx="0" cy="0" r="12" fill="none" stroke="#2b353b" stroke-width="1.8"/><path d="M0.00 -12.00A12 12 0 0 1 10.39 -6.00" fill="none" stroke="#f3ede4" stroke-width="2.2"/><path d="M0.00 0.00L10.83 -6.25" stroke="#f3ede4" stroke-width="2.4000000000000004" stroke-linecap="butt"/></g></svg><div class="t " style="left:1298px;top:968px;font-size:10px;line-height:10px;font-weight:bold;color:#f3ede4;width:44px;text-align:center">5.24 dB</div><div class="t " style="left:1298px;top:985px;font-size:10px;line-height:10px;font-weight:bold;color:#f3ede4;width:44px;text-align:center">Dry/Wet</div><svg style="left:1302.0px;top:990.5px;overflow:visible" width="36" height="36"><g transform="translate(18,18)"><circle cx="0" cy="0" r="12" fill="none" stroke="#2b353b" stroke-width="1.8"/><path d="M-8.49 8.49A12 12 0 0 1 -1.05 -11.95" fill="none" stroke="#f3ede4" stroke-width="2.2"/><path d="M0.00 0.00L-1.09 -12.45" stroke="#f3ede4" stroke-width="2.4000000000000004" stroke-linecap="butt"/></g></svg><div class="t " style="left:1300px;top:1022px;font-size:10px;line-height:10px;font-weight:bold;color:#f3ede4;width:40px;text-align:center">49 %</div><div style="left:1358px;top:850px;width:395px;height:16px;background:#fdf3e6;border-radius:4px 4px 0 0"></div><div style="left:1361px;top:853px;width:11px;height:11px;box-sizing:border-box;border:1px solid #333;border-radius:50%"></div><div class="t " style="left:1378px;top:855px;font-size:10px;line-height:10px;font-weight:bold;color:#333;">Brooklyn</div><svg style="left:1722px;top:853px" width="28" height="12"><circle cx="5" cy="6" r="5" fill="#333"/><path d="M3 7l2-2.5h2.5M6.5 3l1.5 1.5-1.5 1.5M7.5 5.5L5 8H3" stroke="#f3ede4" stroke-width="1" fill="none"/><path d="M19 1.5h6l1.5 1.5v7.5h-7.5z" fill="#333"/><rect x="20.5" y="2.5" width="3.5" height="2.5" fill="#f3ede4"/></svg><div class="t " style="left:1363px;top:873px;font-size:10px;line-height:10px;font-weight:bold;color:#f3ede4;">Filter</div><div style="left:1376px;top:884px;width:25px;height:12px;background:#fdf3e6;"></div><div class="t " style="left:1376px;top:886px;font-size:10px;line-height:10px;font-weight:normal;color:#333;width:25px;text-align:center">On</div><div class="t " style="left:1363px;top:911px;font-size:10px;line-height:10px;font-weight:bold;color:#f3ede4;">Frequency</div><svg style="left:1370.5px;top:916.0px;overflow:visible" width="36" height="36"><g transform="translate(18,18)"><circle cx="0" cy="0" r="12" fill="none" stroke="#2b353b" stroke-width="1.8"/><path d="M-8.49 8.49A12 12 0 0 1 3.11 -11.59" fill="none" stroke="#f3ede4" stroke-width="2"/><path d="M0.78 -2.90L3.24 -12.07" stroke="#f3ede4" stroke-width="2.2" stroke-linecap="butt"/></g></svg><div class="t " style="left:1370px;top:947px;font-size:10px;line-height:10px;font-weight:bold;color:#f3ede4;width:36px;text-align:center">757 Hz</div><div style="left:1376px;top:971px;width:24px;height:12px;background:#2d363d;"></div><svg style="left:1376px;top:971px" width="24" height="12"><path d="M6 4h8a2 2 0 0 1 2 2v3" stroke="#f3ede4" stroke-width="1.2" fill="none"/></svg><div style="left:1376px;top:987px;width:24px;height:12px;background:#2d363d;"></div><svg style="left:1376px;top:987px" width="24" height="12"><path d="M6 9V6a2 2 0 0 1 2-2h8" stroke="#f3ede4" stroke-width="1.2" fill="none"/></svg><div style="left:1376px;top:1003px;width:24px;height:12px;background:#2d363d;"></div><svg style="left:1376px;top:1003px" width="24" height="12"><path d="M6 9V6a2 2 0 0 1 2-2h4a2 2 0 0 1 2 2v3" stroke="#f3ede4" stroke-width="1.2" fill="none"/></svg><div style="left:1376px;top:1019px;width:24px;height:12px;background:#fdf3e6;"></div><svg style="left:1376px;top:1019px" width="24" height="12"><path d="M4 3l3 5h8l3-5" stroke="#333" stroke-width="1.2" fill="none"/></svg><div style="left:1417px;top:873px;width:1px;height:160px;background:#2b343b;"></div><div class="t " style="left:1421px;top:873px;font-size:10px;line-height:10px;font-weight:bold;color:#f3ede4;">Mode</div><div style="left:1430px;top:885px;width:22px;height:11px;background:#f2a08c;"></div><div class="t " style="left:1430px;top:886px;font-size:10px;line-height:10px;font-weight:normal;color:#333;width:22px;text-align:center">B</div><div class="t " style="left:1426px;top:906px;font-size:10px;line-height:10px;font-weight:bold;color:#f3ede4;">Decay</div><svg style="left:1422.3px;top:910.5px;overflow:visible" width="38" height="38"><g transform="translate(19,19)"><circle cx="0" cy="0" r="13" fill="none" stroke="#2b353b" stroke-width="1.8"/><path d="M-9.19 9.19A13 13 0 1 1 6.50 11.26" fill="none" stroke="#f3ede4" stroke-width="2.2"/><path d="M0.00 0.00L6.75 11.69" stroke="#f3ede4" stroke-width="2.4000000000000004" stroke-linecap="butt"/></g></svg><div class="t " style="left:1428px;top:943px;font-size:10px;line-height:10px;font-weight:bold;color:#f3ede4;width:27px;text-align:center">100</div><div style="left:1425px;top:962px;width:31px;height:12px;background:#2d363d;"></div><div class="t " style="left:1425px;top:963px;font-size:10px;line-height:10px;font-weight:bold;color:#f3ede4;width:31px;text-align:center">Const</div><div class="t " style="left:1428px;top:984px;font-size:10px;line-height:10px;font-weight:bold;color:#f3ede4;">Color</div><svg style="left:1422.3px;top:989.0px;overflow:visible" width="38" height="38"><g transform="translate(19,19)"><circle cx="0" cy="0" r="13" fill="none" stroke="#2b353b" stroke-width="1.8"/><path d="M-9.19 9.19A13 13 0 1 1 6.50 11.26" fill="none" stroke="#f3ede4" stroke-width="2.2"/><path d="M0.00 0.00L6.75 11.69" stroke="#f3ede4" stroke-width="2.4000000000000004" stroke-linecap="butt"/></g></svg><div class="t " style="left:1428px;top:1021px;font-size:10px;line-height:10px;font-weight:bold;color:#f3ede4;width:27px;text-align:center">100</div><div class="t " style="left:1468px;top:873px;font-size:10px;line-height:10px;font-weight:bold;color:#f3ede4;">I</div><div style="left:1476.4px;top:885px;width:24px;height:11px;background:#fdf3e6;"></div><div class="t " style="left:1476.4px;top:886px;font-size:10px;line-height:10px;font-weight:normal;color:#333;width:24px;text-align:center">On</div><div class="t " style="left:1468.4px;top:901px;font-size:10px;line-height:10px;font-weight:bold;color:#f3ede4;width:40px;text-align:center">Note</div><div class="tri" style="left:1484.4px;top:913px;border-width:4px 4px 0 4px;border-color:#f3ede4 transparent transparent transparent"></div><svg style="left:1470.4px;top:913.5px;overflow:visible" width="36" height="36"><g transform="translate(18,18)"><circle cx="0" cy="0" r="12" fill="none" stroke="#2b353b" stroke-width="1.8"/><path d="M0.00 -12.00A12 12 0 0 1 3.11 -11.59" fill="none" stroke="#f3ede4" stroke-width="2.2"/><path d="M0.00 0.00L3.24 -12.07" stroke="#f3ede4" stroke-width="2.4000000000000004" stroke-linecap="butt"/></g></svg><div class="t " style="left:1468.4px;top:944px;font-size:10px;line-height:10px;font-weight:bold;color:#f3ede4;width:40px;text-align:center">D2</div><div style="left:1475.4px;top:962px;width:26px;height:12px;background:#2d363d;"></div><div class="t " style="left:1475.4px;top:963px;font-size:10px;line-height:10px;font-weight:bold;color:#f3ede4;width:26px;text-align:center">0</div><div class="t " style="left:1468.4px;top:984px;font-size:10px;line-height:10px;font-weight:bold;color:#f3ede4;width:40px;text-align:center">Gain</div><svg style="left:1470.4px;top:990.5px;overflow:visible" width="36" height="36"><g transform="translate(18,18)"><circle cx="0" cy="0" r="12" fill="none" stroke="#2b353b" stroke-width="1.8"/><path d="M-8.49 8.49A12 12 0 1 1 11.82 2.08" fill="none" stroke="#f3ede4" stroke-width="2.2"/><path d="M0.00 0.00L12.31 2.17" stroke="#f3ede4" stroke-width="2.4000000000000004" stroke-linecap="butt"/></g></svg><div class="t " style="left:1468.4px;top:1022px;font-size:10px;line-height:10px;font-weight:bold;color:#f3ede4;width:40px;text-align:center">0.00 dB</div><div class="t " style="left:1516px;top:873px;font-size:10px;line-height:10px;font-weight:bold;color:#f3ede4;">II</div><div style="left:1524.4px;top:885px;width:24px;height:11px;background:#fdf3e6;"></div><div class="t " style="left:1524.4px;top:886px;font-size:10px;line-height:10px;font-weight:normal;color:#333;width:24px;text-align:center">On</div><div class="t " style="left:1516.4px;top:901px;font-size:10px;line-height:10px;font-weight:bold;color:#f3ede4;width:40px;text-align:center">Pitch</div><div class="tri" style="left:1532.4px;top:913px;border-width:4px 4px 0 4px;border-color:#f3ede4 transparent transparent transparent"></div><svg style="left:1518.4px;top:913.5px;overflow:visible" width="36" height="36"><g transform="translate(18,18)"><circle cx="0" cy="0" r="12" fill="none" stroke="#2b353b" stroke-width="1.8"/><path d="M0.00 -12.00A12 12 0 0 1 11.28 4.10" fill="none" stroke="#f3ede4" stroke-width="2.2"/><path d="M0.00 0.00L11.75 4.28" stroke="#f3ede4" stroke-width="2.4000000000000004" stroke-linecap="butt"/></g></svg><div class="t " style="left:1516.4px;top:944px;font-size:10px;line-height:10px;font-weight:bold;color:#f3ede4;width:40px;text-align:center">+12 st</div><div style="left:1523.4px;top:962px;width:26px;height:12px;background:#2d363d;"></div><div class="t " style="left:1523.4px;top:963px;font-size:10px;line-height:10px;font-weight:bold;color:#f3ede4;width:18px;text-align:right">-3</div><div class="tri" style="left:1541.4px;top:963px;border-width:4.5px 6px 4.5px 0;border-color:transparent #f3ede4 transparent transparent"></div><div class="t " style="left:1516.4px;top:984px;font-size:10px;line-height:10px;font-weight:bold;color:#f3ede4;width:40px;text-align:center">Gain</div><svg style="left:1518.4px;top:990.5px;overflow:visible" width="36" height="36"><g transform="translate(18,18)"><circle cx="0" cy="0" r="12" fill="none" stroke="#2b353b" stroke-width="1.8"/><path d="M-8.49 8.49A12 12 0 1 1 11.82 2.08" fill="none" stroke="#f3ede4" stroke-width="2.2"/><path d="M0.00 0.00L12.31 2.17" stroke="#f3ede4" stroke-width="2.4000000000000004" stroke-linecap="butt"/></g></svg><div class="t " style="left:1516.4px;top:1022px;font-size:10px;line-height:10px;font-weight:bold;color:#f3ede4;width:40px;text-align:center">0.00 dB</div><div class="t " style="left:1564px;top:873px;font-size:10px;line-height:10px;font-weight:bold;color:#f3ede4;">III</div><div style="left:1572.4px;top:885px;width:24px;height:11px;background:#fdf3e6;"></div><div class="t " style="left:1572.4px;top:886px;font-size:10px;line-height:10px;font-weight:normal;color:#333;width:24px;text-align:center">On</div><div class="t " style="left:1564.4px;top:901px;font-size:10px;line-height:10px;font-weight:bold;color:#f3ede4;width:40px;text-align:center">Pitch</div><div class="tri" style="left:1580.4px;top:913px;border-width:4px 4px 0 4px;border-color:#f3ede4 transparent transparent transparent"></div><svg style="left:1566.4px;top:913.5px;overflow:visible" width="36" height="36"><g transform="translate(18,18)"><circle cx="0" cy="0" r="12" fill="none" stroke="#2b353b" stroke-width="1.8"/><path d="M0.00 -12.00A12 12 0 0 1 10.39 -6.00" fill="none" stroke="#f3ede4" stroke-width="2.2"/><path d="M0.00 0.00L10.83 -6.25" stroke="#f3ede4" stroke-width="2.4000000000000004" stroke-linecap="butt"/></g></svg><div class="t " style="left:1564.4px;top:944px;font-size:10px;line-height:10px;font-weight:bold;color:#f3ede4;width:40px;text-align:center">+7 st</div><div style="left:1571.4px;top:962px;width:26px;height:12px;background:#2d363d;"></div><div class="t " style="left:1571.4px;top:963px;font-size:10px;line-height:10px;font-weight:bold;color:#f3ede4;width:18px;text-align:right">7</div><div class="tri" style="left:1589.4px;top:963px;border-width:4.5px 6px 4.5px 0;border-color:transparent #f3ede4 transparent transparent"></div><div class="t " style="left:1564.4px;top:984px;font-size:10px;line-height:10px;font-weight:bold;color:#f3ede4;width:40px;text-align:center">Gain</div><svg style="left:1566.4px;top:990.5px;overflow:visible" width="36" height="36"><g transform="translate(18,18)"><circle cx="0" cy="0" r="12" fill="none" stroke="#2b353b" stroke-width="1.8"/><path d="M-8.49 8.49A12 12 0 1 1 11.82 2.08" fill="none" stroke="#f3ede4" stroke-width="2.2"/><path d="M0.00 0.00L12.31 2.17" stroke="#f3ede4" stroke-width="2.4000000000000004" stroke-linecap="butt"/></g></svg><div class="t " style="left:1564.4px;top:1022px;font-size:10px;line-height:10px;font-weight:bold;color:#f3ede4;width:40px;text-align:center">0.00 dB</div><div class="t " style="left:1612px;top:873px;font-size:10px;line-height:10px;font-weight:bold;color:#f3ede4;">IV</div><div style="left:1620.4px;top:885px;width:24px;height:11px;background:#fdf3e6;"></div><div class="t " style="left:1620.4px;top:886px;font-size:10px;line-height:10px;font-weight:normal;color:#333;width:24px;text-align:center">On</div><div class="t " style="left:1612.4px;top:901px;font-size:10px;line-height:10px;font-weight:bold;color:#f3ede4;width:40px;text-align:center">Pitch</div><div class="tri" style="left:1628.4px;top:913px;border-width:4px 4px 0 4px;border-color:#f3ede4 transparent transparent transparent"></div><svg style="left:1614.4px;top:913.5px;overflow:visible" width="36" height="36"><g transform="translate(18,18)"><circle cx="0" cy="0" r="12" fill="none" stroke="#2b353b" stroke-width="1.8"/><path d="M0.00 -12.00A12 12 0 0 1 4.10 -11.28" fill="none" stroke="#f3ede4" stroke-width="2.2"/><path d="M0.00 0.00L4.28 -11.75" stroke="#f3ede4" stroke-width="2.4000000000000004" stroke-linecap="butt"/></g></svg><div class="t " style="left:1612.4px;top:944px;font-size:10px;line-height:10px;font-weight:bold;color:#f3ede4;width:40px;text-align:center">+3 st</div><div style="left:1619.4px;top:962px;width:26px;height:12px;background:#2d363d;"></div><div class="t " style="left:1619.4px;top:963px;font-size:10px;line-height:10px;font-weight:bold;color:#f3ede4;width:18px;text-align:right">-8</div><div class="tri" style="left:1637.4px;top:963px;border-width:4.5px 6px 4.5px 0;border-color:transparent #f3ede4 transparent transparent"></div><div class="t " style="left:1612.4px;top:984px;font-size:10px;line-height:10px;font-weight:bold;color:#f3ede4;width:40px;text-align:center">Gain</div><svg style="left:1614.4px;top:990.5px;overflow:visible" width="36" height="36"><g transform="translate(18,18)"><circle cx="0" cy="0" r="12" fill="none" stroke="#2b353b" stroke-width="1.8"/><path d="M-8.49 8.49A12 12 0 1 1 11.82 2.08" fill="none" stroke="#f3ede4" stroke-width="2.2"/><path d="M0.00 0.00L12.31 2.17" stroke="#f3ede4" stroke-width="2.4000000000000004" stroke-linecap="butt"/></g></svg><div class="t " style="left:1612.4px;top:1022px;font-size:10px;line-height:10px;font-weight:bold;color:#f3ede4;width:40px;text-align:center">0.00 dB</div><div class="t " style="left:1660px;top:873px;font-size:10px;line-height:10px;font-weight:bold;color:#f3ede4;">V</div><div style="left:1668.4px;top:885px;width:24px;height:11px;background:#fdf3e6;"></div><div class="t " style="left:1668.4px;top:886px;font-size:10px;line-height:10px;font-weight:normal;color:#333;width:24px;text-align:center">On</div><div class="t " style="left:1660.4px;top:901px;font-size:10px;line-height:10px;font-weight:bold;color:#f3ede4;width:40px;text-align:center">Pitch</div><div class="tri" style="left:1676.4px;top:913px;border-width:4px 4px 0 4px;border-color:#f3ede4 transparent transparent transparent"></div><svg style="left:1662.4px;top:913.5px;overflow:visible" width="36" height="36"><g transform="translate(18,18)"><circle cx="0" cy="0" r="12" fill="none" stroke="#2b353b" stroke-width="1.8"/><path d="M0.00 -12.00A12 12 0 0 1 4.10 -11.28" fill="none" stroke="#f3ede4" stroke-width="2.2"/><path d="M0.00 0.00L4.28 -11.75" stroke="#f3ede4" stroke-width="2.4000000000000004" stroke-linecap="butt"/></g></svg><div class="t " style="left:1660.4px;top:944px;font-size:10px;line-height:10px;font-weight:bold;color:#f3ede4;width:40px;text-align:center">+3 st</div><div style="left:1667.4px;top:962px;width:26px;height:12px;background:#2d363d;"></div><div class="t " style="left:1667.4px;top:963px;font-size:10px;line-height:10px;font-weight:bold;color:#f3ede4;width:18px;text-align:right">12</div><div class="tri" style="left:1685.4px;top:963px;border-width:4.5px 6px 4.5px 0;border-color:transparent #f3ede4 transparent transparent"></div><div class="t " style="left:1660.4px;top:984px;font-size:10px;line-height:10px;font-weight:bold;color:#f3ede4;width:40px;text-align:center">Gain</div><svg style="left:1662.4px;top:990.5px;overflow:visible" width="36" height="36"><g transform="translate(18,18)"><circle cx="0" cy="0" r="12" fill="none" stroke="#2b353b" stroke-width="1.8"/><path d="M-8.49 8.49A12 12 0 1 1 11.82 2.08" fill="none" stroke="#f3ede4" stroke-width="2.2"/><path d="M0.00 0.00L12.31 2.17" stroke="#f3ede4" stroke-width="2.4000000000000004" stroke-linecap="butt"/></g></svg><div class="t " style="left:1660.4px;top:1022px;font-size:10px;line-height:10px;font-weight:bold;color:#f3ede4;width:40px;text-align:center">0.00 dB</div><div class="t " style="left:1706px;top:873px;font-size:10px;line-height:10px;font-weight:bold;color:#f3ede4;width:40px;text-align:center">Width</div><svg style="left:1708.0px;top:878.5px;overflow:visible" width="36" height="36"><g transform="translate(18,18)"><circle cx="0" cy="0" r="12" fill="none" stroke="#2b353b" stroke-width="1.8"/><path d="M-8.49 8.49A12 12 0 1 1 6.00 10.39" fill="none" stroke="#f3ede4" stroke-width="2.2"/><path d="M0.00 0.00L6.25 10.83" stroke="#f3ede4" stroke-width="2.4000000000000004" stroke-linecap="butt"/></g></svg><div class="t " style="left:1706px;top:909px;font-size:10px;line-height:10px;font-weight:bold;color:#f3ede4;width:40px;text-align:center">100 %</div><div class="t " style="left:1706px;top:926px;font-size:10px;line-height:10px;font-weight:bold;color:#f3ede4;width:40px;text-align:center">Gain</div><div class="tri" style="left:1722px;top:937px;border-width:4px 4px 0 4px;border-color:#f3ede4 transparent transparent transparent"></div><svg style="left:1708.0px;top:937.0px;overflow:visible" width="36" height="36"><g transform="translate(18,18)"><circle cx="0" cy="0" r="12" fill="none" stroke="#2b353b" stroke-width="1.8"/><path d="M-10.88 5.07A12 12 0 0 1 0.00 -12.00" fill="none" stroke="#f3ede4" stroke-width="2.2"/><path d="M0.00 0.00L-11.33 5.28" stroke="#f3ede4" stroke-width="2.4000000000000004" stroke-linecap="butt"/></g></svg><div class="t " style="left:1704px;top:968px;font-size:10px;line-height:10px;font-weight:bold;color:#f3ede4;width:44px;text-align:center">-10.0 dB</div><div class="t " style="left:1704px;top:985px;font-size:10px;line-height:10px;font-weight:bold;color:#f3ede4;width:44px;text-align:center">Dry/Wet</div><svg style="left:1708.0px;top:990.5px;overflow:visible" width="36" height="36"><g transform="translate(18,18)"><circle cx="0" cy="0" r="12" fill="none" stroke="#2b353b" stroke-width="1.8"/><path d="M-8.49 8.49A12 12 0 1 1 6.00 10.39" fill="none" stroke="#f3ede4" stroke-width="2.2"/><path d="M0.00 0.00L6.25 10.83" stroke="#f3ede4" stroke-width="2.4000000000000004" stroke-linecap="butt"/></g></svg><div class="t " style="left:1706px;top:1022px;font-size:10px;line-height:10px;font-weight:bold;color:#f3ede4;width:40px;text-align:center">100 %</div><div class="t " style="left:1772px;top:931px;font-size:10px;line-height:10px;font-weight:normal;color:#f3ede4;">オーディオエフェクトをここ</div><div class="t " style="left:1797px;top:946px;font-size:10px;line-height:10px;font-weight:normal;color:#f3ede4;">へドロップします</div><svg style="left:1748px;top:1053px" width="134" height="16"><g stroke="#8d989e" stroke-width="0.6" fill="none"><path d="M2 2v12"/><path d="M6 2v12"/><path d="M10 2v12"/><path d="M14 2v12"/><path d="M18 2v12"/><path d="M22 2v12"/><path d="M26 2v12"/><path d="M30 2v12"/><path d="M34 2v12"/><path d="M38 2v12"/><path d="M42 2v12"/><path d="M46 2v12"/><path d="M50 2v12"/><path d="M54 2v12"/><path d="M58 2v12"/><path d="M66 4v9"/><path d="M69 4v9"/><path d="M72 4v9"/><path d="M75 4v9"/><path d="M78 4v9"/><path d="M81 4v9"/><path d="M84 4v9"/><path d="M87 4v9"/><path d="M90 4v9"/><path d="M93 4v9"/><path d="M96 4v9"/><path d="M99 4v9"/></g><rect x="104" y="1" width="30" height="14" fill="none" stroke="#cfd3d4" stroke-width="0.8"/><path d="M107 4v9" stroke="#cfd3d4" stroke-width="0.7"/><path d="M111 4v9" stroke="#cfd3d4" stroke-width="0.7"/><path d="M115 4v9" stroke="#cfd3d4" stroke-width="0.7"/><path d="M119 4v9" stroke="#cfd3d4" stroke-width="0.7"/><path d="M123 4v9" stroke="#cfd3d4" stroke-width="0.7"/><path d="M127 4v9" stroke="#cfd3d4" stroke-width="0.7"/><path d="M131 4v9" stroke="#cfd3d4" stroke-width="0.7"/></svg>
</body></html>
